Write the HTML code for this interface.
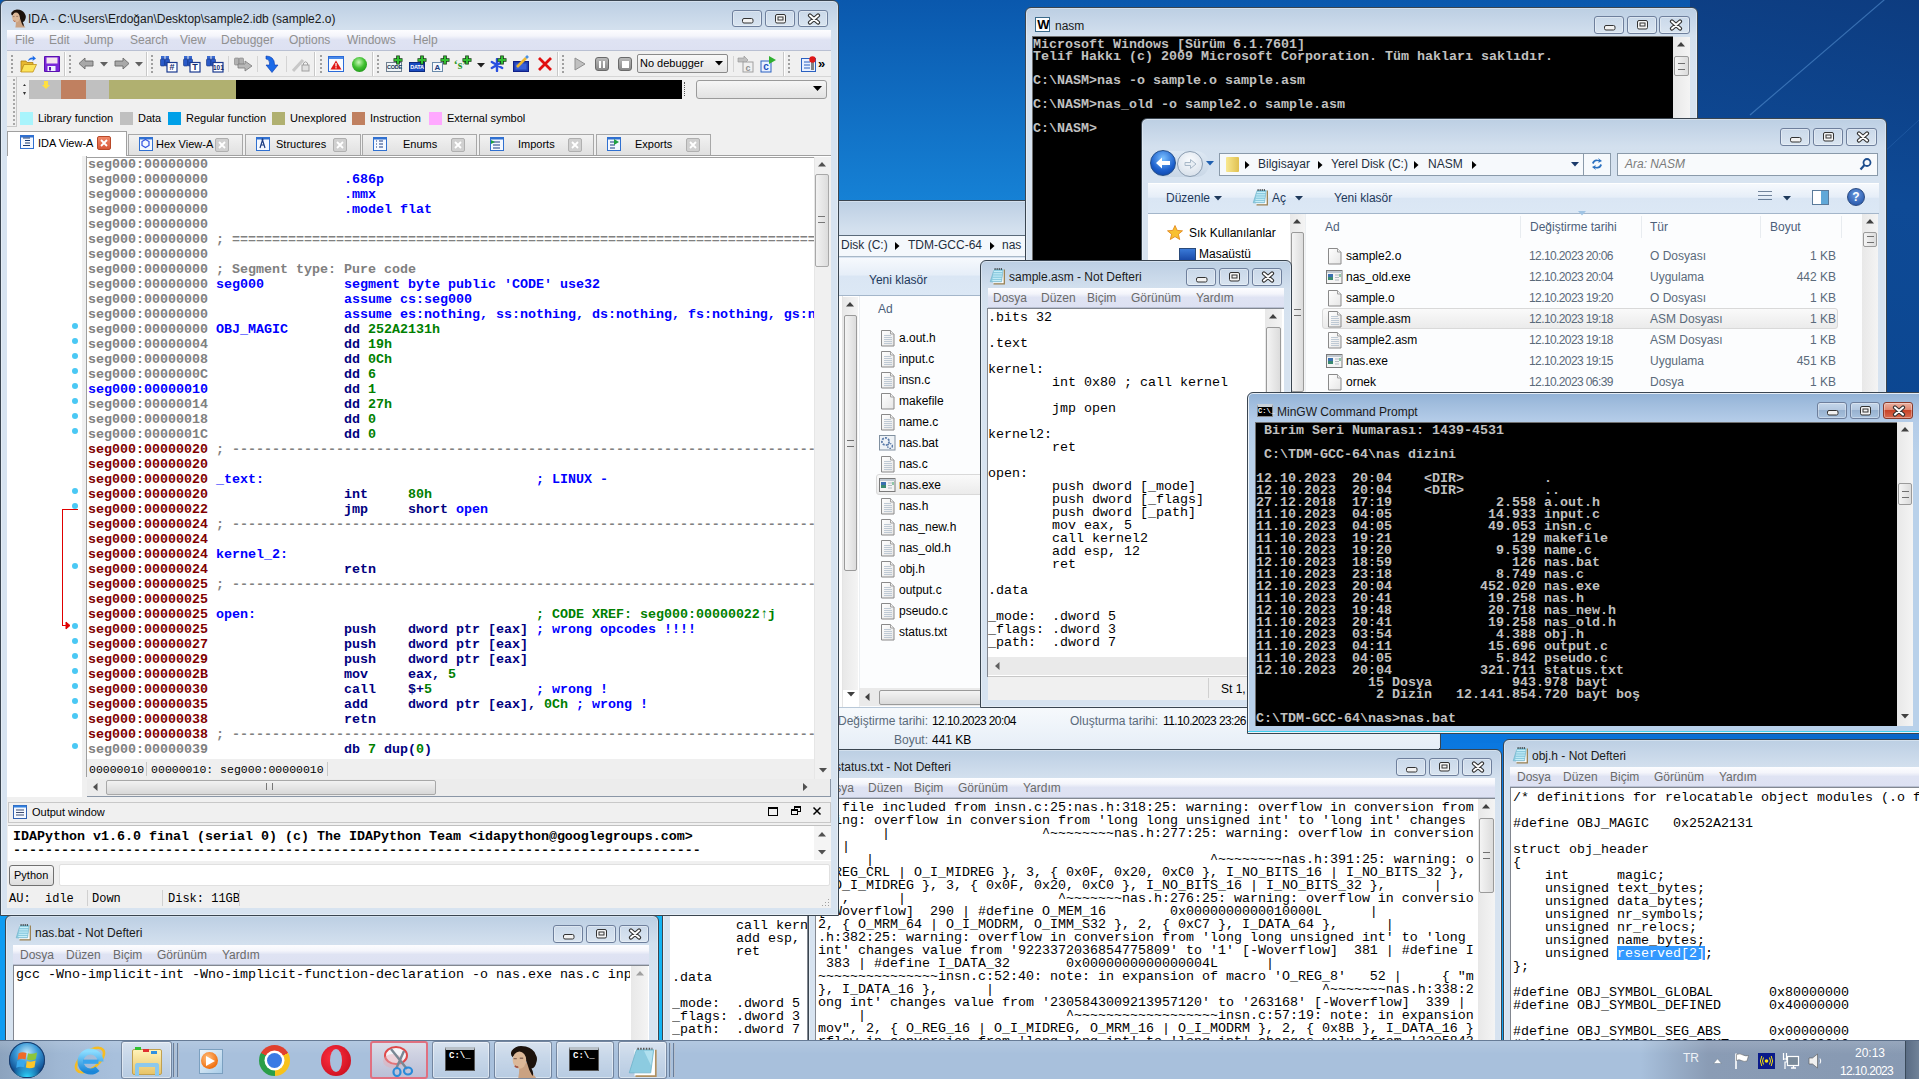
<!DOCTYPE html><html><head><meta charset="utf-8"><style>
html,body{margin:0;padding:0;width:1919px;height:1079px;overflow:hidden;background:#0e62bb}
body{position:relative;font-family:"Liberation Sans",sans-serif;font-size:12px;color:#000}
.a,.t{position:absolute}
.t{white-space:pre;line-height:15px}
.ui{font-family:"Liberation Sans",sans-serif;font-size:12px;line-height:15px}
.m{font-family:"Liberation Mono",monospace}
</style></head><body><div class="a" style="left:0;top:0;width:1919px;height:1079px;background:linear-gradient(180deg,#0a58ad 0px,#1682d6 205px,#0e74d8 600px,#0b78e0 750px,#10a0f0 1000px)"></div><div class="a" style="left:1690px;top:0;width:229px;height:420px;background:linear-gradient(190deg,#0d3c80 0%,#0e4a96 45%,#0b4690 100%)"></div><svg class="a" style="left:1690px;top:0" width="229" height="420"><path d="M60 115 L229 -30" stroke="#5a96d6" stroke-width="1.2" opacity="0.55"/><path d="M0 330 L229 120" stroke="#3a78c0" stroke-width="1" opacity="0.35"/></svg><div class="a" style="left:1440px;top:733px;width:479px;height:10px;background:linear-gradient(90deg,#0a78e0,#0a66c8)"></div><div class="a" style="left:0;top:905px;width:12px;height:140px;background:#0e9cf2"></div><div class="a" style="left:800px;top:200px;width:641px;height:549px;box-sizing:border-box;border:1px solid #3a4550;border-radius:6px 6px 0 0;background:linear-gradient(#bccfe3 0px,#c6d6e8 12px,#d3e0ee 28px,#d7e3f0 60px,#d7e3f0);box-shadow:inset 0 0 0 1px rgba(255,255,255,0.35)"></div><div class="a" style="left:839px;top:235px;width:186px;height:22px;background:#f4f8fc;border-top:1px solid #5a6a7a;border-bottom:1px solid #a8b8c8;box-sizing:border-box"></div><div class="t ui" style="left:841px;top:238px;color:#1e2e3e">Disk (C:)</div><svg class="a" style="left:895px;top:242px" width="5" height="8"><path d="M0 0L4.5 4L0 8Z" fill="#000"/></svg><div class="t ui" style="left:908px;top:238px;color:#1e2e3e">TDM-GCC-64</div><svg class="a" style="left:990px;top:242px" width="5" height="8"><path d="M0 0L4.5 4L0 8Z" fill="#000"/></svg><div class="t ui" style="left:1002px;top:238px;color:#1e2e3e">nas</div><div class="a" style="left:839px;top:258px;width:600px;height:38px;background:linear-gradient(#f6f9fd 0%,#e6eef8 45%,#dae6f4 50%,#dce8f5 100%);border-bottom:1px solid #a4b6ca;box-sizing:border-box"></div><div class="t ui" style="left:869px;top:273px;color:#1e395b">Yeni klasör</div><div class="a" style="left:839px;top:296px;width:600px;height:411px;background:#fff"></div><div class="a" style="left:843px;top:297px;width:15px;height:393px;background:linear-gradient(90deg,#e8e8e8,#f4f4f4);"></div><div class="a" style="left:844px;top:315px;width:13px;height:256px;background:linear-gradient(90deg,#f4f4f4,#dcdcdc);border:1px solid #9a9a9a;border-radius:2px;box-sizing:border-box"></div><svg class="a" style="left:846px;top:302px" width="8" height="5"><path d="M0 4.5L4 0L8 4.5Z" fill="#404040"/></svg><div class="a" style="left:847px;top:440px;width:7px;height:5px;border-top:1px solid #707070;border-bottom:1px solid #707070"></div><svg class="a" style="left:847px;top:692px" width="8" height="5"><path d="M0 0L4 4.5L8 0Z" fill="#404040"/></svg><div class="a" style="left:839px;top:296px;width:4px;height:411px;background:#fdfdfd;border-right:1px solid #e4e4e4;box-sizing:border-box"></div><div class="a" style="left:859px;top:296px;width:580px;height:411px;background:#fcfdfe;border-left:1px solid #eceff2;box-sizing:border-box"></div><div class="t ui" style="left:878px;top:302px;color:#4c607a">Ad</div><svg class="a" style="left:881px;top:330px" width="14" height="17"><defs><linearGradient id="fg" x1="0" y1="0" x2="1" y2="1"><stop offset="0" stop-color="#ffffff"/><stop offset="1" stop-color="#e6e6e6"/></linearGradient></defs><path d="M0.5 0.5H9.5L13 4V16H0.5Z" fill="url(#fg)" stroke="#8a8a8a"/><path d="M9.5 0.5V4H13" fill="#f0f0f0" stroke="#a0a0a0"/><path d="M3 5.5H10M3 7.5H11M3 9.5H11M3 11.5H11M3 13.5H11" stroke="#b8c4d0" stroke-width="0.9"/></svg><div class="t ui" style="left:899px;top:331px;color:#000">a.out.h</div><svg class="a" style="left:881px;top:351px" width="14" height="17"><defs><linearGradient id="fg" x1="0" y1="0" x2="1" y2="1"><stop offset="0" stop-color="#ffffff"/><stop offset="1" stop-color="#e6e6e6"/></linearGradient></defs><path d="M0.5 0.5H9.5L13 4V16H0.5Z" fill="url(#fg)" stroke="#8a8a8a"/><path d="M9.5 0.5V4H13" fill="#f0f0f0" stroke="#a0a0a0"/><path d="M3 5.5H10M3 7.5H11M3 9.5H11M3 11.5H11M3 13.5H11" stroke="#b8c4d0" stroke-width="0.9"/></svg><div class="t ui" style="left:899px;top:352px;color:#000">input.c</div><svg class="a" style="left:881px;top:372px" width="14" height="17"><defs><linearGradient id="fg" x1="0" y1="0" x2="1" y2="1"><stop offset="0" stop-color="#ffffff"/><stop offset="1" stop-color="#e6e6e6"/></linearGradient></defs><path d="M0.5 0.5H9.5L13 4V16H0.5Z" fill="url(#fg)" stroke="#8a8a8a"/><path d="M9.5 0.5V4H13" fill="#f0f0f0" stroke="#a0a0a0"/><path d="M3 5.5H10M3 7.5H11M3 9.5H11M3 11.5H11M3 13.5H11" stroke="#b8c4d0" stroke-width="0.9"/></svg><div class="t ui" style="left:899px;top:373px;color:#000">insn.c</div><svg class="a" style="left:881px;top:393px" width="14" height="17"><defs><linearGradient id="fg" x1="0" y1="0" x2="1" y2="1"><stop offset="0" stop-color="#ffffff"/><stop offset="1" stop-color="#e6e6e6"/></linearGradient></defs><path d="M0.5 0.5H9.5L13 4V16H0.5Z" fill="url(#fg)" stroke="#8a8a8a"/><path d="M9.5 0.5V4H13" fill="#f0f0f0" stroke="#a0a0a0"/></svg><div class="t ui" style="left:899px;top:394px;color:#000">makefile</div><svg class="a" style="left:881px;top:414px" width="14" height="17"><defs><linearGradient id="fg" x1="0" y1="0" x2="1" y2="1"><stop offset="0" stop-color="#ffffff"/><stop offset="1" stop-color="#e6e6e6"/></linearGradient></defs><path d="M0.5 0.5H9.5L13 4V16H0.5Z" fill="url(#fg)" stroke="#8a8a8a"/><path d="M9.5 0.5V4H13" fill="#f0f0f0" stroke="#a0a0a0"/><path d="M3 5.5H10M3 7.5H11M3 9.5H11M3 11.5H11M3 13.5H11" stroke="#b8c4d0" stroke-width="0.9"/></svg><div class="t ui" style="left:899px;top:415px;color:#000">name.c</div><svg class="a" style="left:879px;top:435px" width="17" height="16"><rect x="0.5" y="0.5" width="15.5" height="14.5" fill="#eef2f6" stroke="#8090a0"/><circle cx="6.5" cy="6.5" r="3.6" fill="none" stroke="#5a7aa8" stroke-width="1.8" stroke-dasharray="2 1.2"/><circle cx="11" cy="11" r="2.4" fill="none" stroke="#5a7aa8" stroke-width="1.4" stroke-dasharray="1.5 1"/></svg><div class="t ui" style="left:899px;top:436px;color:#000">nas.bat</div><svg class="a" style="left:881px;top:456px" width="14" height="17"><defs><linearGradient id="fg" x1="0" y1="0" x2="1" y2="1"><stop offset="0" stop-color="#ffffff"/><stop offset="1" stop-color="#e6e6e6"/></linearGradient></defs><path d="M0.5 0.5H9.5L13 4V16H0.5Z" fill="url(#fg)" stroke="#8a8a8a"/><path d="M9.5 0.5V4H13" fill="#f0f0f0" stroke="#a0a0a0"/><path d="M3 5.5H10M3 7.5H11M3 9.5H11M3 11.5H11M3 13.5H11" stroke="#b8c4d0" stroke-width="0.9"/></svg><div class="t ui" style="left:899px;top:457px;color:#000">nas.c</div><div class="a" style="left:876px;top:474px;width:110px;height:21px;background:linear-gradient(#fafafa,#ebebeb);border:1px solid #d9d9d9;border-radius:3px;box-sizing:border-box"></div><svg class="a" style="left:879px;top:478px" width="17" height="15"><rect x="0.5" y="0.5" width="15.5" height="13" fill="#f4f4f4" stroke="#7a7a7a"/><rect x="1" y="1" width="15" height="2" fill="#c0c8d0"/><rect x="2" y="4" width="5" height="6" fill="#3a8a70"/><rect x="2" y="4" width="5" height="3" fill="#3a70b0"/><path d="M9 5H13M9 7.5H13M9 10H13" stroke="#b0b8c0"/><path d="M14 4V7" stroke="#2a9a5a"/></svg><div class="t ui" style="left:899px;top:478px;color:#000">nas.exe</div><svg class="a" style="left:881px;top:498px" width="14" height="17"><defs><linearGradient id="fg" x1="0" y1="0" x2="1" y2="1"><stop offset="0" stop-color="#ffffff"/><stop offset="1" stop-color="#e6e6e6"/></linearGradient></defs><path d="M0.5 0.5H9.5L13 4V16H0.5Z" fill="url(#fg)" stroke="#8a8a8a"/><path d="M9.5 0.5V4H13" fill="#f0f0f0" stroke="#a0a0a0"/><path d="M3 5.5H10M3 7.5H11M3 9.5H11M3 11.5H11M3 13.5H11" stroke="#b8c4d0" stroke-width="0.9"/></svg><div class="t ui" style="left:899px;top:499px;color:#000">nas.h</div><svg class="a" style="left:881px;top:519px" width="14" height="17"><defs><linearGradient id="fg" x1="0" y1="0" x2="1" y2="1"><stop offset="0" stop-color="#ffffff"/><stop offset="1" stop-color="#e6e6e6"/></linearGradient></defs><path d="M0.5 0.5H9.5L13 4V16H0.5Z" fill="url(#fg)" stroke="#8a8a8a"/><path d="M9.5 0.5V4H13" fill="#f0f0f0" stroke="#a0a0a0"/><path d="M3 5.5H10M3 7.5H11M3 9.5H11M3 11.5H11M3 13.5H11" stroke="#b8c4d0" stroke-width="0.9"/></svg><div class="t ui" style="left:899px;top:520px;color:#000">nas_new.h</div><svg class="a" style="left:881px;top:540px" width="14" height="17"><defs><linearGradient id="fg" x1="0" y1="0" x2="1" y2="1"><stop offset="0" stop-color="#ffffff"/><stop offset="1" stop-color="#e6e6e6"/></linearGradient></defs><path d="M0.5 0.5H9.5L13 4V16H0.5Z" fill="url(#fg)" stroke="#8a8a8a"/><path d="M9.5 0.5V4H13" fill="#f0f0f0" stroke="#a0a0a0"/><path d="M3 5.5H10M3 7.5H11M3 9.5H11M3 11.5H11M3 13.5H11" stroke="#b8c4d0" stroke-width="0.9"/></svg><div class="t ui" style="left:899px;top:541px;color:#000">nas_old.h</div><svg class="a" style="left:881px;top:561px" width="14" height="17"><defs><linearGradient id="fg" x1="0" y1="0" x2="1" y2="1"><stop offset="0" stop-color="#ffffff"/><stop offset="1" stop-color="#e6e6e6"/></linearGradient></defs><path d="M0.5 0.5H9.5L13 4V16H0.5Z" fill="url(#fg)" stroke="#8a8a8a"/><path d="M9.5 0.5V4H13" fill="#f0f0f0" stroke="#a0a0a0"/><path d="M3 5.5H10M3 7.5H11M3 9.5H11M3 11.5H11M3 13.5H11" stroke="#b8c4d0" stroke-width="0.9"/></svg><div class="t ui" style="left:899px;top:562px;color:#000">obj.h</div><svg class="a" style="left:881px;top:582px" width="14" height="17"><defs><linearGradient id="fg" x1="0" y1="0" x2="1" y2="1"><stop offset="0" stop-color="#ffffff"/><stop offset="1" stop-color="#e6e6e6"/></linearGradient></defs><path d="M0.5 0.5H9.5L13 4V16H0.5Z" fill="url(#fg)" stroke="#8a8a8a"/><path d="M9.5 0.5V4H13" fill="#f0f0f0" stroke="#a0a0a0"/><path d="M3 5.5H10M3 7.5H11M3 9.5H11M3 11.5H11M3 13.5H11" stroke="#b8c4d0" stroke-width="0.9"/></svg><div class="t ui" style="left:899px;top:583px;color:#000">output.c</div><svg class="a" style="left:881px;top:603px" width="14" height="17"><defs><linearGradient id="fg" x1="0" y1="0" x2="1" y2="1"><stop offset="0" stop-color="#ffffff"/><stop offset="1" stop-color="#e6e6e6"/></linearGradient></defs><path d="M0.5 0.5H9.5L13 4V16H0.5Z" fill="url(#fg)" stroke="#8a8a8a"/><path d="M9.5 0.5V4H13" fill="#f0f0f0" stroke="#a0a0a0"/><path d="M3 5.5H10M3 7.5H11M3 9.5H11M3 11.5H11M3 13.5H11" stroke="#b8c4d0" stroke-width="0.9"/></svg><div class="t ui" style="left:899px;top:604px;color:#000">pseudo.c</div><svg class="a" style="left:881px;top:624px" width="14" height="17"><defs><linearGradient id="fg" x1="0" y1="0" x2="1" y2="1"><stop offset="0" stop-color="#ffffff"/><stop offset="1" stop-color="#e6e6e6"/></linearGradient></defs><path d="M0.5 0.5H9.5L13 4V16H0.5Z" fill="url(#fg)" stroke="#8a8a8a"/><path d="M9.5 0.5V4H13" fill="#f0f0f0" stroke="#a0a0a0"/><path d="M3 5.5H10M3 7.5H11M3 9.5H11M3 11.5H11M3 13.5H11" stroke="#b8c4d0" stroke-width="0.9"/></svg><div class="t ui" style="left:899px;top:625px;color:#000">status.txt</div><div class="a" style="left:859px;top:688px;width:130px;height:18px;background:#eaeaea"></div><div class="a" style="left:879px;top:690px;width:110px;height:15px;background:linear-gradient(#f4f4f4,#dadada);border:1px solid #9a9a9a;border-radius:2px;box-sizing:border-box"></div><svg class="a" style="left:865px;top:693px" width="5" height="8"><path d="M4.5 0L0 4L4.5 8Z" fill="#404040"/></svg><div class="a" style="left:839px;top:707px;width:600px;height:42px;background:linear-gradient(#f6f9fc,#e6eef7);border-top:1px solid #b8c8d8;box-sizing:border-box"></div><div class="t ui" style="left:838px;top:714px;color:#5a6a7a">Değiştirme tarihi:</div><div class="t ui" style="left:932px;top:714px;color:#000;letter-spacing:-0.6px">12.10.2023 20:04</div><div class="t ui" style="left:1070px;top:714px;color:#5a6a7a">Oluşturma tarihi:</div><div class="t ui" style="left:1163px;top:714px;color:#000;letter-spacing:-0.6px">11.10.2023 23:26</div><div class="t ui" style="left:894px;top:733px;color:#5a6a7a">Boyut:</div><div class="t ui" style="left:932px;top:733px;color:#000">441 KB</div><div class="a" style="left:1025px;top:7px;width:673px;height:400px;box-sizing:border-box;border:1px solid #3a4550;border-radius:6px 6px 0 0;background:linear-gradient(#bccfe3 0px,#c6d6e8 12px,#d3e0ee 28px,#d7e3f0 60px,#d7e3f0);box-shadow:inset 0 0 0 1px rgba(255,255,255,0.35)"></div><div class="a" style="left:1035px;top:17px;width:15px;height:15px;background:#fff;border:1px solid #3a6a8a;box-sizing:border-box;font:bold 13px/13px 'Liberation Sans';color:#000;text-align:center;letter-spacing:-2px">W</div><div class="t ui" style="left:1055px;top:19px;color:#1a1a1a">nasm</div><div class="a" style="left:1594px;top:16px;width:30px;height:18px;border:1px solid #6e7f9c;border-radius:3px;box-sizing:border-box;background:linear-gradient(rgba(255,255,255,0.10),rgba(255,255,255,0.18));box-shadow:inset 0 0 0 1px rgba(255,255,255,0.35)"><svg class="a" style="left:9px;top:8px" width="12" height="6"><rect x="0.5" y="0.5" width="10.5" height="4.5" rx="1.5" fill="#f2f2f2" stroke="#333" stroke-width="1"/></svg></div><div class="a" style="left:1627px;top:16px;width:30px;height:18px;border:1px solid #6e7f9c;border-radius:3px;box-sizing:border-box;background:linear-gradient(rgba(255,255,255,0.10),rgba(255,255,255,0.18));box-shadow:inset 0 0 0 1px rgba(255,255,255,0.35)"><svg class="a" style="left:9px;top:3px" width="12" height="10"><rect x="0.5" y="0.5" width="10" height="8.5" rx="1.5" fill="#f4f4f4" stroke="#333" stroke-width="1"/><rect x="3" y="3" width="5" height="3" fill="#f4f4f4" stroke="#333" stroke-width="1"/></svg></div><div class="a" style="left:1659px;top:16px;width:31px;height:18px;border:1px solid #6e7f9c;border-radius:3px;box-sizing:border-box;background:linear-gradient(rgba(255,255,255,0.10),rgba(255,255,255,0.18));box-shadow:inset 0 0 0 1px rgba(255,255,255,0.35)"><svg class="a" style="left:9px;top:2px" width="14" height="12"><path d="M3 2.5L11 9.5M11 2.5L3 9.5" stroke="#333" stroke-width="4.2" stroke-linecap="round"/><path d="M3 2.5L11 9.5M11 2.5L3 9.5" stroke="#fff" stroke-width="2" stroke-linecap="round"/></svg></div><div class="a" style="left:1032px;top:36px;width:641px;height:364px;background:#000;border-top:1px solid #707070;border-left:1px solid #707070;box-sizing:border-box"></div><div class="a" style="left:1033px;top:39px;font-family:'Liberation Mono',monospace;font-size:13.33px;font-weight:bold;color:#c0c0c0;line-height:12px;white-space:pre">Microsoft Windows [Sürüm 6.1.7601]
Telif Hakkı (c) 2009 Microsoft Corporation. Tüm hakları saklıdır.

C:\NASM&gt;nas -o sample.o sample.asm

C:\NASM&gt;nas_old -o sample2.o sample.asm

C:\NASM&gt;</div><div class="a" style="left:1673px;top:37px;width:17px;height:363px;background:linear-gradient(90deg,#e8e8e8,#f4f4f4);"></div><div class="a" style="left:1674px;top:56px;width:15px;height:20px;background:linear-gradient(90deg,#f4f4f4,#dcdcdc);border:1px solid #9a9a9a;border-radius:2px;box-sizing:border-box"></div><svg class="a" style="left:1677px;top:42px" width="8" height="5"><path d="M0 4.5L4 0L8 4.5Z" fill="#404040"/></svg><div class="a" style="left:1678px;top:63px;width:7px;height:5px;border-top:1px solid #707070;border-bottom:1px solid #707070"></div><div class="a" style="left:1141px;top:118px;width:746px;height:290px;box-sizing:border-box;border:1px solid #3a4550;border-radius:6px 6px 0 0;background:linear-gradient(#bccfe3 0px,#c6d6e8 12px,#d3e0ee 28px,#d7e3f0 60px,#d7e3f0);box-shadow:inset 0 0 0 1px rgba(255,255,255,0.35)"></div><div class="a" style="left:1780px;top:128px;width:30px;height:18px;border:1px solid #6e7f9c;border-radius:3px;box-sizing:border-box;background:linear-gradient(rgba(255,255,255,0.10),rgba(255,255,255,0.18));box-shadow:inset 0 0 0 1px rgba(255,255,255,0.35)"><svg class="a" style="left:9px;top:8px" width="12" height="6"><rect x="0.5" y="0.5" width="10.5" height="4.5" rx="1.5" fill="#f2f2f2" stroke="#333" stroke-width="1"/></svg></div><div class="a" style="left:1813px;top:128px;width:30px;height:18px;border:1px solid #6e7f9c;border-radius:3px;box-sizing:border-box;background:linear-gradient(rgba(255,255,255,0.10),rgba(255,255,255,0.18));box-shadow:inset 0 0 0 1px rgba(255,255,255,0.35)"><svg class="a" style="left:9px;top:3px" width="12" height="10"><rect x="0.5" y="0.5" width="10" height="8.5" rx="1.5" fill="#f4f4f4" stroke="#333" stroke-width="1"/><rect x="3" y="3" width="5" height="3" fill="#f4f4f4" stroke="#333" stroke-width="1"/></svg></div><div class="a" style="left:1846px;top:128px;width:31px;height:18px;border:1px solid #6e7f9c;border-radius:3px;box-sizing:border-box;background:linear-gradient(rgba(255,255,255,0.10),rgba(255,255,255,0.18));box-shadow:inset 0 0 0 1px rgba(255,255,255,0.35)"><svg class="a" style="left:9px;top:2px" width="14" height="12"><path d="M3 2.5L11 9.5M11 2.5L3 9.5" stroke="#333" stroke-width="4.2" stroke-linecap="round"/><path d="M3 2.5L11 9.5M11 2.5L3 9.5" stroke="#fff" stroke-width="2" stroke-linecap="round"/></svg></div><div class="a" style="left:1151px;top:151px;width:58px;height:26px;background:linear-gradient(#dde8f3,#c9d7e6);border-radius:13px"></div><div class="a" style="left:1150px;top:150px;width:26px;height:26px;background:radial-gradient(circle at 50% 30%,#7ac0ff,#1c5fcc 60%,#0a3c9a);border:1px solid #234f8a;border-radius:50%;box-sizing:border-box"></div><svg class="a" style="left:1155px;top:156px" width="16" height="14"><path d="M1 7L7 1.5V5H15V9H7V12.5Z" fill="#fff"/></svg><div class="a" style="left:1177px;top:151px;width:26px;height:26px;background:radial-gradient(circle at 50% 35%,#fafcfe,#d0dae6);border:1px solid #8a9cb0;border-radius:50%;box-sizing:border-box"></div><svg class="a" style="left:1184px;top:158px" width="13" height="12"><path d="M12 6L6.5 1.5V4.5H1V7.5H6.5V10.5Z" fill="#e8eef4" stroke="#a8b8c8"/></svg><svg class="a" style="left:1206px;top:161px" width="8" height="5"><path d="M0 0H8L4 4.5Z" fill="#2060b0"/></svg><div class="a" style="left:1219px;top:153px;width:365px;height:23px;background:#f6f9fc;border:1px solid #8a9aaa;box-sizing:border-box"></div><div class="a" style="left:1226px;top:157px;width:13px;height:15px;background:linear-gradient(90deg,#f8e890,#e0c050);border-radius:1px"></div><svg class="a" style="left:1245px;top:161px" width="5" height="8"><path d="M0 0L4.5 4L0 8Z" fill="#000"/></svg><div class="t ui" style="left:1258px;top:157px;color:#1e2e3e">Bilgisayar</div><svg class="a" style="left:1318px;top:161px" width="5" height="8"><path d="M0 0L4.5 4L0 8Z" fill="#000"/></svg><div class="t ui" style="left:1331px;top:157px;color:#1e2e3e">Yerel Disk (C:)</div><svg class="a" style="left:1414px;top:161px" width="5" height="8"><path d="M0 0L4.5 4L0 8Z" fill="#000"/></svg><div class="t ui" style="left:1428px;top:157px;color:#1e2e3e">NASM</div><svg class="a" style="left:1472px;top:161px" width="5" height="8"><path d="M0 0L4.5 4L0 8Z" fill="#000"/></svg><svg class="a" style="left:1571px;top:162px" width="8" height="5"><path d="M0 0H8L4 4.5Z" fill="#1a3a6a"/></svg><div class="a" style="left:1584px;top:153px;width:27px;height:23px;background:#f6f9fc;border:1px solid #8a9aaa;border-left:none;box-sizing:border-box"></div><svg class="a" style="left:1590px;top:157px" width="14" height="14"><path d="M2 6 Q4 1 9 3 L8 1 L12 4 L8 6 L9 4.5 Q5 3 3.5 7Z M12 8 Q10 13 5 11 L6 13 L2 10 L6 8 L5 9.5 Q9 11 10.5 7Z" fill="#2a70c0"/></svg><div class="a" style="left:1617px;top:153px;width:261px;height:23px;background:#f8fafc;border:1px solid #8a9aaa;box-sizing:border-box"></div><div class="t ui" style="left:1625px;top:157px;color:#7a7a7a;font-style:italic">Ara: NASM</div><svg class="a" style="left:1859px;top:157px" width="13" height="14"><circle cx="8" cy="5.5" r="3.5" fill="none" stroke="#1e4e8e" stroke-width="1.8"/><path d="M5.5 8L1.5 12.5" stroke="#1e4e8e" stroke-width="2.2"/></svg><div class="a" style="left:1148px;top:183px;width:731px;height:31px;background:linear-gradient(#f6f9fd 0%,#e6eef8 45%,#dae6f4 50%,#dce8f5 100%);border-bottom:1px solid #a4b6ca;border-top:1px solid #fff;box-sizing:border-box"></div><div class="t ui" style="left:1166px;top:191px;color:#1e395b">Düzenle</div><svg class="a" style="left:1214px;top:196px" width="8" height="5"><path d="M0 0H8L4 4.5Z" fill="#1e395b"/></svg><svg class="a" style="left:1252px;top:188px" width="17" height="18"><rect x="4" y="2.5" width="11" height="14" fill="#fff"/><path d="M15.3 2.5V16.8H4.5" fill="none" stroke="#9a8050" stroke-width="1.3"/><path d="M5 2.5H14.2L12.6 14.8H1.2Z" fill="#8ccbe0"/><path d="M4.6 4.5H13.8M4.2 6.8H13.5M3.9 9.1H13.2M3.6 11.4H12.9M3.3 13.5H12.7" stroke="#c8eef8" stroke-width="1"/><path d="M5 2.5H14.2L12.6 14.8H1.2Z" fill="none" stroke="#6ab0c8" stroke-width="0.6"/><path d="M5.5 2H13.5" stroke="#333" stroke-width="1.4" stroke-dasharray="1.2 0.9"/></svg><div class="t ui" style="left:1272px;top:191px;color:#1e395b">Aç</div><svg class="a" style="left:1295px;top:196px" width="8" height="5"><path d="M0 0H8L4 4.5Z" fill="#1e395b"/></svg><div class="t ui" style="left:1334px;top:191px;color:#1e395b">Yeni klasör</div><div class="a" style="left:1758px;top:191px;width:14px;height:12px;background:repeating-linear-gradient(#1e395b 0,#1e395b 1px,transparent 1px,transparent 4px);opacity:0.6"></div><svg class="a" style="left:1783px;top:196px" width="8" height="5"><path d="M0 0H8L4 4.5Z" fill="#1e395b"/></svg><div class="a" style="left:1812px;top:190px;width:17px;height:15px;background:linear-gradient(90deg,#fff 55%,#60a8d8 55%);border:1px solid #5a7a9a;box-sizing:border-box"></div><div class="a" style="left:1847px;top:188px;width:18px;height:18px;background:radial-gradient(circle at 50% 35%,#6a9ae0,#1a4aa0);border:1px solid #2a4a80;border-radius:50%;box-sizing:border-box;font:bold 12px/16px 'Liberation Sans';color:#fff;text-align:center">?</div><div class="a" style="left:1148px;top:214px;width:142px;height:181px;background:#fff"></div><svg class="a" style="left:1167px;top:225px" width="16" height="15"><path d="M8 0.5L10.2 5.4L15.5 5.8L11.4 9.2L12.7 14.5L8 11.6L3.3 14.5L4.6 9.2L0.5 5.8L5.8 5.4Z" fill="#f8c030" stroke="#e08010" stroke-width="0.8"/></svg><div class="t ui" style="left:1189px;top:226px;color:#000">Sık Kullanılanlar</div><div class="a" style="left:1179px;top:248px;width:17px;height:13px;background:linear-gradient(#3a7ad8,#1a4aa8);border:1px solid #2a4a7a;box-sizing:border-box"></div><div class="t ui" style="left:1199px;top:247px;color:#000">Masaüstü</div><div class="a" style="left:1290px;top:214px;width:15px;height:181px;background:linear-gradient(90deg,#e8e8e8,#f4f4f4);"></div><div class="a" style="left:1291px;top:232px;width:13px;height:160px;background:linear-gradient(90deg,#f4f4f4,#dcdcdc);border:1px solid #9a9a9a;border-radius:2px;box-sizing:border-box"></div><svg class="a" style="left:1293px;top:219px" width="8" height="5"><path d="M0 4.5L4 0L8 4.5Z" fill="#404040"/></svg><div class="a" style="left:1294px;top:309px;width:7px;height:5px;border-top:1px solid #707070;border-bottom:1px solid #707070"></div><div class="a" style="left:1305px;top:214px;width:557px;height:181px;background:#fcfdfe;border-left:1px solid #eceff2;box-sizing:border-box"></div><div class="t ui" style="left:1325px;top:220px;color:#4c607a">Ad</div><div class="t ui" style="left:1530px;top:220px;color:#4c607a">Değiştirme tarihi</div><svg class="a" style="left:1578px;top:211px" width="8" height="5"><path d="M0 0H8L4 4.5Z" fill="#a0c4e4"/></svg><div class="a" style="left:1520px;top:216px;width:1px;height:22px;background:#e8ecf0"></div><div class="t ui" style="left:1650px;top:220px;color:#4c607a">Tür</div><div class="a" style="left:1641px;top:216px;width:1px;height:22px;background:#e8ecf0"></div><div class="t ui" style="left:1770px;top:220px;color:#4c607a">Boyut</div><div class="a" style="left:1760px;top:216px;width:1px;height:22px;background:#e8ecf0"></div><div class="a" style="left:1841px;top:216px;width:1px;height:22px;background:#e8ecf0"></div><svg class="a" style="left:1328px;top:248px" width="14" height="17"><defs><linearGradient id="fg" x1="0" y1="0" x2="1" y2="1"><stop offset="0" stop-color="#ffffff"/><stop offset="1" stop-color="#e6e6e6"/></linearGradient></defs><path d="M0.5 0.5H9.5L13 4V16H0.5Z" fill="url(#fg)" stroke="#8a8a8a"/><path d="M9.5 0.5V4H13" fill="#f0f0f0" stroke="#a0a0a0"/></svg><div class="t ui" style="left:1346px;top:249px;color:#000">sample2.o</div><div class="t ui" style="left:1529px;top:249px;color:#5a6a7a;letter-spacing:-0.6px">12.10.2023 20:06</div><div class="t ui" style="left:1650px;top:249px;color:#5a6a7a">O Dosyası</div><div class="t ui" style="left:1700px;width:136px;text-align:right;top:249px;color:#5a6a7a">1 KB</div><svg class="a" style="left:1326px;top:270px" width="17" height="15"><rect x="0.5" y="0.5" width="15.5" height="13" fill="#f4f4f4" stroke="#7a7a7a"/><rect x="1" y="1" width="15" height="2" fill="#c0c8d0"/><rect x="2" y="4" width="5" height="6" fill="#3a8a70"/><rect x="2" y="4" width="5" height="3" fill="#3a70b0"/><path d="M9 5H13M9 7.5H13M9 10H13" stroke="#b0b8c0"/><path d="M14 4V7" stroke="#2a9a5a"/></svg><div class="t ui" style="left:1346px;top:270px;color:#000">nas_old.exe</div><div class="t ui" style="left:1529px;top:270px;color:#5a6a7a;letter-spacing:-0.6px">12.10.2023 20:04</div><div class="t ui" style="left:1650px;top:270px;color:#5a6a7a">Uygulama</div><div class="t ui" style="left:1700px;width:136px;text-align:right;top:270px;color:#5a6a7a">442 KB</div><svg class="a" style="left:1328px;top:290px" width="14" height="17"><defs><linearGradient id="fg" x1="0" y1="0" x2="1" y2="1"><stop offset="0" stop-color="#ffffff"/><stop offset="1" stop-color="#e6e6e6"/></linearGradient></defs><path d="M0.5 0.5H9.5L13 4V16H0.5Z" fill="url(#fg)" stroke="#8a8a8a"/><path d="M9.5 0.5V4H13" fill="#f0f0f0" stroke="#a0a0a0"/></svg><div class="t ui" style="left:1346px;top:291px;color:#000">sample.o</div><div class="t ui" style="left:1529px;top:291px;color:#5a6a7a;letter-spacing:-0.6px">12.10.2023 19:20</div><div class="t ui" style="left:1650px;top:291px;color:#5a6a7a">O Dosyası</div><div class="t ui" style="left:1700px;width:136px;text-align:right;top:291px;color:#5a6a7a">1 KB</div><div class="a" style="left:1322px;top:308px;width:516px;height:21px;background:linear-gradient(#fafafa,#ebebeb);border:1px solid #d9d9d9;border-radius:3px;box-sizing:border-box"></div><svg class="a" style="left:1328px;top:311px" width="14" height="17"><defs><linearGradient id="fg" x1="0" y1="0" x2="1" y2="1"><stop offset="0" stop-color="#ffffff"/><stop offset="1" stop-color="#e6e6e6"/></linearGradient></defs><path d="M0.5 0.5H9.5L13 4V16H0.5Z" fill="url(#fg)" stroke="#8a8a8a"/><path d="M9.5 0.5V4H13" fill="#f0f0f0" stroke="#a0a0a0"/><path d="M3 5.5H10M3 7.5H11M3 9.5H11M3 11.5H11M3 13.5H11" stroke="#b8c4d0" stroke-width="0.9"/></svg><div class="t ui" style="left:1346px;top:312px;color:#000">sample.asm</div><div class="t ui" style="left:1529px;top:312px;color:#5a6a7a;letter-spacing:-0.6px">12.10.2023 19:18</div><div class="t ui" style="left:1650px;top:312px;color:#5a6a7a">ASM Dosyası</div><div class="t ui" style="left:1700px;width:136px;text-align:right;top:312px;color:#5a6a7a">1 KB</div><svg class="a" style="left:1328px;top:332px" width="14" height="17"><defs><linearGradient id="fg" x1="0" y1="0" x2="1" y2="1"><stop offset="0" stop-color="#ffffff"/><stop offset="1" stop-color="#e6e6e6"/></linearGradient></defs><path d="M0.5 0.5H9.5L13 4V16H0.5Z" fill="url(#fg)" stroke="#8a8a8a"/><path d="M9.5 0.5V4H13" fill="#f0f0f0" stroke="#a0a0a0"/><path d="M3 5.5H10M3 7.5H11M3 9.5H11M3 11.5H11M3 13.5H11" stroke="#b8c4d0" stroke-width="0.9"/></svg><div class="t ui" style="left:1346px;top:333px;color:#000">sample2.asm</div><div class="t ui" style="left:1529px;top:333px;color:#5a6a7a;letter-spacing:-0.6px">12.10.2023 19:18</div><div class="t ui" style="left:1650px;top:333px;color:#5a6a7a">ASM Dosyası</div><div class="t ui" style="left:1700px;width:136px;text-align:right;top:333px;color:#5a6a7a">1 KB</div><svg class="a" style="left:1326px;top:354px" width="17" height="15"><rect x="0.5" y="0.5" width="15.5" height="13" fill="#f4f4f4" stroke="#7a7a7a"/><rect x="1" y="1" width="15" height="2" fill="#c0c8d0"/><rect x="2" y="4" width="5" height="6" fill="#3a8a70"/><rect x="2" y="4" width="5" height="3" fill="#3a70b0"/><path d="M9 5H13M9 7.5H13M9 10H13" stroke="#b0b8c0"/><path d="M14 4V7" stroke="#2a9a5a"/></svg><div class="t ui" style="left:1346px;top:354px;color:#000">nas.exe</div><div class="t ui" style="left:1529px;top:354px;color:#5a6a7a;letter-spacing:-0.6px">12.10.2023 19:15</div><div class="t ui" style="left:1650px;top:354px;color:#5a6a7a">Uygulama</div><div class="t ui" style="left:1700px;width:136px;text-align:right;top:354px;color:#5a6a7a">451 KB</div><svg class="a" style="left:1328px;top:374px" width="14" height="17"><defs><linearGradient id="fg" x1="0" y1="0" x2="1" y2="1"><stop offset="0" stop-color="#ffffff"/><stop offset="1" stop-color="#e6e6e6"/></linearGradient></defs><path d="M0.5 0.5H9.5L13 4V16H0.5Z" fill="url(#fg)" stroke="#8a8a8a"/><path d="M9.5 0.5V4H13" fill="#f0f0f0" stroke="#a0a0a0"/></svg><div class="t ui" style="left:1346px;top:375px;color:#000">ornek</div><div class="t ui" style="left:1529px;top:375px;color:#5a6a7a;letter-spacing:-0.6px">12.10.2023 06:39</div><div class="t ui" style="left:1650px;top:375px;color:#5a6a7a">Dosya</div><div class="t ui" style="left:1700px;width:136px;text-align:right;top:375px;color:#5a6a7a">1 KB</div><div class="a" style="left:1862px;top:214px;width:16px;height:181px;background:linear-gradient(90deg,#e8e8e8,#f4f4f4);"></div><div class="a" style="left:1863px;top:232px;width:14px;height:15px;background:linear-gradient(90deg,#f4f4f4,#dcdcdc);border:1px solid #9a9a9a;border-radius:2px;box-sizing:border-box"></div><svg class="a" style="left:1866px;top:219px" width="8" height="5"><path d="M0 4.5L4 0L8 4.5Z" fill="#404040"/></svg><div class="a" style="left:1867px;top:236px;width:7px;height:5px;border-top:1px solid #707070;border-bottom:1px solid #707070"></div><div class="a" style="left:980px;top:260px;width:312px;height:448px;box-sizing:border-box;border:1px solid #3a4550;border-radius:6px 6px 0 0;background:linear-gradient(#bccfe3 0px,#c6d6e8 12px,#d3e0ee 28px,#d7e3f0 60px,#d7e3f0);box-shadow:inset 0 0 0 1px rgba(255,255,255,0.35)"></div><svg class="a" style="left:989px;top:267px" width="17" height="18"><rect x="4" y="2.5" width="11" height="14" fill="#fff"/><path d="M15.3 2.5V16.8H4.5" fill="none" stroke="#9a8050" stroke-width="1.3"/><path d="M5 2.5H14.2L12.6 14.8H1.2Z" fill="#8ccbe0"/><path d="M4.6 4.5H13.8M4.2 6.8H13.5M3.9 9.1H13.2M3.6 11.4H12.9M3.3 13.5H12.7" stroke="#c8eef8" stroke-width="1"/><path d="M5 2.5H14.2L12.6 14.8H1.2Z" fill="none" stroke="#6ab0c8" stroke-width="0.6"/><path d="M5.5 2H13.5" stroke="#333" stroke-width="1.4" stroke-dasharray="1.2 0.9"/></svg><div class="t ui" style="left:1009px;top:270px;color:#1a1a1a">sample.asm - Not Defteri</div><div class="a" style="left:1186px;top:268px;width:30px;height:18px;border:1px solid #6e7f9c;border-radius:3px;box-sizing:border-box;background:linear-gradient(rgba(255,255,255,0.10),rgba(255,255,255,0.18));box-shadow:inset 0 0 0 1px rgba(255,255,255,0.35)"><svg class="a" style="left:9px;top:8px" width="12" height="6"><rect x="0.5" y="0.5" width="10.5" height="4.5" rx="1.5" fill="#f2f2f2" stroke="#333" stroke-width="1"/></svg></div><div class="a" style="left:1219px;top:268px;width:30px;height:18px;border:1px solid #6e7f9c;border-radius:3px;box-sizing:border-box;background:linear-gradient(rgba(255,255,255,0.10),rgba(255,255,255,0.18));box-shadow:inset 0 0 0 1px rgba(255,255,255,0.35)"><svg class="a" style="left:9px;top:3px" width="12" height="10"><rect x="0.5" y="0.5" width="10" height="8.5" rx="1.5" fill="#f4f4f4" stroke="#333" stroke-width="1"/><rect x="3" y="3" width="5" height="3" fill="#f4f4f4" stroke="#333" stroke-width="1"/></svg></div><div class="a" style="left:1252px;top:268px;width:30px;height:18px;border:1px solid #6e7f9c;border-radius:3px;box-sizing:border-box;background:linear-gradient(rgba(255,255,255,0.10),rgba(255,255,255,0.18));box-shadow:inset 0 0 0 1px rgba(255,255,255,0.35)"><svg class="a" style="left:8px;top:2px" width="14" height="12"><path d="M3 2.5L11 9.5M11 2.5L3 9.5" stroke="#333" stroke-width="4.2" stroke-linecap="round"/><path d="M3 2.5L11 9.5M11 2.5L3 9.5" stroke="#fff" stroke-width="2" stroke-linecap="round"/></svg></div><div class="a" style="left:988px;top:288px;width:296px;height:20px;background:linear-gradient(#fdfdff 0%,#f4f5fb 30%,#dfe3f3 50%,#dde1f2 100%);border-bottom:1px solid #b9c0d2;box-sizing:border-box"></div><div class="t ui" style="left:993px;top:291px;color:#6a6a6a">Dosya</div><div class="t ui" style="left:1041px;top:291px;color:#6a6a6a">Düzen</div><div class="t ui" style="left:1087px;top:291px;color:#6a6a6a">Biçim</div><div class="t ui" style="left:1131px;top:291px;color:#6a6a6a">Görünüm</div><div class="t ui" style="left:1196px;top:291px;color:#6a6a6a">Yardım</div><div class="a" style="left:987px;top:308px;width:297px;height:369px;background:#fff;border-top:1px solid #828790;border-left:1px solid #828790;box-sizing:border-box"></div><div class="a" style="left:988px;top:311px;width:277px;height:347px;overflow:hidden;font-family:'Liberation Mono',monospace;font-size:13.33px;color:#000;line-height:13px;white-space:pre">.bits 32

.text

kernel:
        int 0x80 ; call kernel

        jmp open

kernel2:
        ret

open:
        push dword [_mode]
        push dword [_flags]
        push dword [_path]
        mov eax, 5
        call kernel2
        add esp, 12
        ret

.data

_mode:  .dword 5
_flags: .dword 3
_path:  .dword 7</div><div class="a" style="left:1265px;top:309px;width:17px;height:348px;background:linear-gradient(90deg,#e8e8e8,#f4f4f4);"></div><div class="a" style="left:1266px;top:327px;width:15px;height:340px;background:linear-gradient(90deg,#f4f4f4,#dcdcdc);border:1px solid #9a9a9a;border-radius:2px;box-sizing:border-box"></div><svg class="a" style="left:1269px;top:314px" width="8" height="5"><path d="M0 4.5L4 0L8 4.5Z" fill="#404040"/></svg><div class="a" style="left:1270px;top:494px;width:7px;height:5px;border-top:1px solid #707070;border-bottom:1px solid #707070"></div><svg class="a" style="left:1270px;top:645px" width="8" height="5"><path d="M0 0L4 4.5L8 0Z" fill="#404040"/></svg><div class="a" style="left:988px;top:657px;width:294px;height:18px;background:#eaeaea"></div><svg class="a" style="left:995px;top:662px" width="5" height="8"><path d="M4.5 0L0 4L4.5 8Z" fill="#606060"/></svg><div class="a" style="left:988px;top:676px;width:294px;height:24px;background:#f0f0f0;border-top:1px solid #c8c8c8;box-sizing:border-box"></div><div class="a" style="left:1208px;top:678px;width:1px;height:20px;background:#d0d0d0"></div><div class="t ui" style="left:1221px;top:682px;color:#000">St 1,</div><div class="a" style="left:1247px;top:392px;width:690px;height:342px;box-sizing:border-box;border:1px solid #3a4550;border-radius:6px 6px 0 0;background:linear-gradient(#92b2d6 0px,#a2bede 12px,#b4cce8 28px,#b9d1ea 60px,#b9d1ea);box-shadow:inset 0 0 0 1px rgba(255,255,255,0.75)"></div><div class="a" style="left:1257px;top:404px;width:16px;height:13px;background:#000;border:1px solid #888;border-top:3px solid #c8d0d8;box-sizing:border-box;font:bold 7px/8px 'Liberation Mono';color:#fff;white-space:pre">C:\_</div><div class="t ui" style="left:1277px;top:405px;color:#1a1a1a">MinGW Command Prompt</div><div class="a" style="left:1817px;top:402px;width:30px;height:17px;border:1px solid #6e7f9c;border-radius:3px;box-sizing:border-box;background:linear-gradient(#c4d6ea,#b4c8e0 45%,#98b2d0 50%,#a8c2de);box-shadow:inset 0 0 0 1px rgba(255,255,255,0.35)"><svg class="a" style="left:9px;top:7px" width="12" height="6"><rect x="0.5" y="0.5" width="10.5" height="4.5" rx="1.5" fill="#f2f2f2" stroke="#333" stroke-width="1"/></svg></div><div class="a" style="left:1850px;top:402px;width:30px;height:17px;border:1px solid #6e7f9c;border-radius:3px;box-sizing:border-box;background:linear-gradient(#c4d6ea,#b4c8e0 45%,#98b2d0 50%,#a8c2de);box-shadow:inset 0 0 0 1px rgba(255,255,255,0.35)"><svg class="a" style="left:9px;top:3px" width="12" height="10"><rect x="0.5" y="0.5" width="10" height="8.5" rx="1.5" fill="#f4f4f4" stroke="#333" stroke-width="1"/><rect x="3" y="3" width="5" height="3" fill="#f4f4f4" stroke="#333" stroke-width="1"/></svg></div><div class="a" style="left:1883px;top:402px;width:30px;height:17px;border:1px solid #8a3a2a;border-radius:3px;box-sizing:border-box;background:linear-gradient(#eab0a0,#e08872 45%,#c84428 50%,#d86a50);box-shadow:inset 0 0 0 1px rgba(255,255,255,0.35)"><svg class="a" style="left:8px;top:2px" width="14" height="12"><path d="M3 2.5L11 9.5M11 2.5L3 9.5" stroke="#333" stroke-width="4.2" stroke-linecap="round"/><path d="M3 2.5L11 9.5M11 2.5L3 9.5" stroke="#fff" stroke-width="2" stroke-linecap="round"/></svg></div><div class="a" style="left:1255px;top:422px;width:642px;height:304px;background:#000;border-top:1px solid #707070;border-left:1px solid #707070;box-sizing:border-box"></div><div class="a" style="left:1256px;top:425px;font-family:'Liberation Mono',monospace;font-size:13.33px;font-weight:bold;color:#c0c0c0;line-height:12px;white-space:pre"> Birim Seri Numarası: 1439-4531

 C:\TDM-GCC-64\nas dizini

12.10.2023  20:04    &lt;DIR&gt;          .
12.10.2023  20:04    &lt;DIR&gt;          ..
27.12.2018  17:19             2.558 a.out.h
11.10.2023  04:05            14.933 input.c
11.10.2023  04:05            49.053 insn.c
11.10.2023  19:21               129 makefile
11.10.2023  19:20             9.539 name.c
12.10.2023  18:59               126 nas.bat
11.10.2023  23:18             8.749 nas.c
12.10.2023  20:04           452.020 nas.exe
11.10.2023  20:41            19.258 nas.h
12.10.2023  19:48            20.718 nas_new.h
11.10.2023  20:41            19.258 nas_old.h
11.10.2023  03:54             4.388 obj.h
11.10.2023  04:11            15.696 output.c
11.10.2023  04:05             5.842 pseudo.c
12.10.2023  20:04           321.711 status.txt
              15 Dosya          943.978 bayt
               2 Dizin   12.141.854.720 bayt boş

C:\TDM-GCC-64\nas&gt;nas.bat</div><div class="a" style="left:1897px;top:422px;width:16px;height:304px;background:linear-gradient(90deg,#e8e8e8,#f4f4f4);"></div><div class="a" style="left:1898px;top:483px;width:14px;height:22px;background:linear-gradient(90deg,#f4f4f4,#dcdcdc);border:1px solid #9a9a9a;border-radius:2px;box-sizing:border-box"></div><svg class="a" style="left:1901px;top:427px" width="8" height="5"><path d="M0 4.5L4 0L8 4.5Z" fill="#404040"/></svg><div class="a" style="left:1902px;top:491px;width:7px;height:5px;border-top:1px solid #707070;border-bottom:1px solid #707070"></div><div class="a" style="left:1248px;top:731px;width:671px;height:1px;background:#40d0f0"></div><svg class="a" style="left:1901px;top:714px" width="8" height="5"><path d="M0 0L4 4.5L8 0Z" fill="#404040"/></svg><div class="a" style="left:655px;top:905px;width:10px;height:140px;background:#12b4f4"></div><div class="a" style="left:662px;top:700px;width:155px;height:350px;box-sizing:border-box;border:1px solid #3a4550;border-radius:6px 6px 0 0;background:linear-gradient(#bccfe3 0px,#c6d6e8 12px,#d3e0ee 28px,#d7e3f0 60px,#d7e3f0);box-shadow:inset 0 0 0 1px rgba(255,255,255,0.35)"></div><div class="a" style="left:670px;top:700px;width:137px;height:345px;background:#fff"></div><div class="a" style="left:807px;top:700px;width:1px;height:345px;background:#828790"></div><div class="a" style="left:672px;top:919px;width:135px;height:122px;overflow:hidden;font-family:'Liberation Mono',monospace;font-size:13.33px;color:#000;line-height:13px;white-space:pre">        call kernel2
        add esp, 12
        ret

.data

_mode:  .dword 5
_flags: .dword 3
_path:  .dword 7</div><div class="a" style="left:808px;top:749px;width:694px;height:300px;box-sizing:border-box;border:1px solid #3a4550;border-radius:6px 6px 0 0;background:linear-gradient(#bccfe3 0px,#c6d6e8 12px,#d3e0ee 28px,#d7e3f0 60px,#d7e3f0);box-shadow:inset 0 0 0 1px rgba(255,255,255,0.35)"></div><svg class="a" style="left:815px;top:757px" width="17" height="18"><rect x="4" y="2.5" width="11" height="14" fill="#fff"/><path d="M15.3 2.5V16.8H4.5" fill="none" stroke="#9a8050" stroke-width="1.3"/><path d="M5 2.5H14.2L12.6 14.8H1.2Z" fill="#8ccbe0"/><path d="M4.6 4.5H13.8M4.2 6.8H13.5M3.9 9.1H13.2M3.6 11.4H12.9M3.3 13.5H12.7" stroke="#c8eef8" stroke-width="1"/><path d="M5 2.5H14.2L12.6 14.8H1.2Z" fill="none" stroke="#6ab0c8" stroke-width="0.6"/><path d="M5.5 2H13.5" stroke="#333" stroke-width="1.4" stroke-dasharray="1.2 0.9"/></svg><div class="t ui" style="left:835px;top:760px;color:#1a1a1a">status.txt - Not Defteri</div><div class="a" style="left:1396px;top:758px;width:30px;height:18px;border:1px solid #6e7f9c;border-radius:3px;box-sizing:border-box;background:linear-gradient(rgba(255,255,255,0.10),rgba(255,255,255,0.18));box-shadow:inset 0 0 0 1px rgba(255,255,255,0.35)"><svg class="a" style="left:9px;top:8px" width="12" height="6"><rect x="0.5" y="0.5" width="10.5" height="4.5" rx="1.5" fill="#f2f2f2" stroke="#333" stroke-width="1"/></svg></div><div class="a" style="left:1429px;top:758px;width:30px;height:18px;border:1px solid #6e7f9c;border-radius:3px;box-sizing:border-box;background:linear-gradient(rgba(255,255,255,0.10),rgba(255,255,255,0.18));box-shadow:inset 0 0 0 1px rgba(255,255,255,0.35)"><svg class="a" style="left:9px;top:3px" width="12" height="10"><rect x="0.5" y="0.5" width="10" height="8.5" rx="1.5" fill="#f4f4f4" stroke="#333" stroke-width="1"/><rect x="3" y="3" width="5" height="3" fill="#f4f4f4" stroke="#333" stroke-width="1"/></svg></div><div class="a" style="left:1462px;top:758px;width:30px;height:18px;border:1px solid #6e7f9c;border-radius:3px;box-sizing:border-box;background:linear-gradient(rgba(255,255,255,0.10),rgba(255,255,255,0.18));box-shadow:inset 0 0 0 1px rgba(255,255,255,0.35)"><svg class="a" style="left:8px;top:2px" width="14" height="12"><path d="M3 2.5L11 9.5M11 2.5L3 9.5" stroke="#333" stroke-width="4.2" stroke-linecap="round"/><path d="M3 2.5L11 9.5M11 2.5L3 9.5" stroke="#fff" stroke-width="2" stroke-linecap="round"/></svg></div><div class="a" style="left:815px;top:778px;width:680px;height:20px;background:linear-gradient(#fdfdff 0%,#f4f5fb 30%,#dfe3f3 50%,#dde1f2 100%);border-bottom:1px solid #b9c0d2;box-sizing:border-box"></div><div class="t ui" style="left:820px;top:781px;color:#6a6a6a">Dosya</div><div class="t ui" style="left:868px;top:781px;color:#6a6a6a">Düzen</div><div class="t ui" style="left:914px;top:781px;color:#6a6a6a">Biçim</div><div class="t ui" style="left:958px;top:781px;color:#6a6a6a">Görünüm</div><div class="t ui" style="left:1023px;top:781px;color:#6a6a6a">Yardım</div><div class="a" style="left:815px;top:798px;width:680px;height:250px;background:#fff;border-top:1px solid #828790;border-left:1px solid #828790;box-sizing:border-box"></div><div class="a" style="left:818px;top:801px;width:660px;height:245px;overflow:hidden;font-family:'Liberation Mono',monospace;font-size:13.33px;color:#000;line-height:13px;white-space:pre">In file included from insn.c:25:nas.h:318:25: warning: overflow in conversion from
rning: overflow in conversion from 'long long unsigned int' to 'long int' changes 
        |                   ^~~~~~~~~nas.h:277:25: warning: overflow in conversion
   |
      |                                          ^~~~~~~~~nas.h:391:25: warning: o
_CREG_CRL | O_I_MIDREG }, 3, { 0x0F, 0x20, 0xC0 }, I_NO_BITS_16 | I_NO_BITS_32 },
  O_I_MIDREG }, 3, { 0x0F, 0x20, 0xC0 }, I_NO_BITS_16 | I_NO_BITS_32 },      |
   ,      |                   ^~~~~~~~nas.h:276:25: warning: overflow in conversio
[-Woverflow]  290 | #define O_MEM_16        0x0000000000010000L      |
2, { O_MRM_64 | O_I_MODRM, O_IMM_S32 }, 2, { 0xC7 }, I_DATA_64 },      |
.h:382:25: warning: overflow in conversion from 'long long unsigned int' to 'long
int' changes value from '9223372036854775809' to '1' [-Woverflow]  381 | #define I
 383 | #define I_DATA_32       0x0000000000000004L      |
~~~~~~~~~~~~~~~insn.c:52:40: note: in expansion of macro 'O_REG_8'   52 |     { "m
}, I_DATA_16 },      |                                         ^~~~~~~~nas.h:338:2
ong int' changes value from '2305843009213957120' to '263168' [-Woverflow]  339 | 
     |                         ^~~~~~~~~~~~~~~~~~~insn.c:57:19: note: in expansion
mov", 2, { O_REG_16 | O_I_MIDREG, O_MRM_16 | O_I_MODRM }, 2, { 0x8B }, I_DATA_16 }
rflow in conversion from 'long long int' to 'long int' changes value from '2305843</div><div class="a" style="left:1478px;top:799px;width:17px;height:250px;background:linear-gradient(90deg,#e8e8e8,#f4f4f4);"></div><div class="a" style="left:1479px;top:818px;width:15px;height:75px;background:linear-gradient(90deg,#f4f4f4,#dcdcdc);border:1px solid #9a9a9a;border-radius:2px;box-sizing:border-box"></div><svg class="a" style="left:1482px;top:804px" width="8" height="5"><path d="M0 4.5L4 0L8 4.5Z" fill="#404040"/></svg><div class="a" style="left:1483px;top:852px;width:7px;height:5px;border-top:1px solid #707070;border-bottom:1px solid #707070"></div><div class="a" style="left:1503px;top:739px;width:430px;height:310px;box-sizing:border-box;border:1px solid #3a4550;border-radius:6px 6px 0 0;background:linear-gradient(#bccfe3 0px,#c6d6e8 12px,#d3e0ee 28px,#d7e3f0 60px,#d7e3f0);box-shadow:inset 0 0 0 1px rgba(255,255,255,0.35)"></div><svg class="a" style="left:1512px;top:746px" width="17" height="18"><rect x="4" y="2.5" width="11" height="14" fill="#fff"/><path d="M15.3 2.5V16.8H4.5" fill="none" stroke="#9a8050" stroke-width="1.3"/><path d="M5 2.5H14.2L12.6 14.8H1.2Z" fill="#8ccbe0"/><path d="M4.6 4.5H13.8M4.2 6.8H13.5M3.9 9.1H13.2M3.6 11.4H12.9M3.3 13.5H12.7" stroke="#c8eef8" stroke-width="1"/><path d="M5 2.5H14.2L12.6 14.8H1.2Z" fill="none" stroke="#6ab0c8" stroke-width="0.6"/><path d="M5.5 2H13.5" stroke="#333" stroke-width="1.4" stroke-dasharray="1.2 0.9"/></svg><div class="t ui" style="left:1532px;top:749px;color:#1a1a1a">obj.h - Not Defteri</div><div class="a" style="left:1510px;top:767px;width:420px;height:20px;background:linear-gradient(#fdfdff 0%,#f4f5fb 30%,#dfe3f3 50%,#dde1f2 100%);border-bottom:1px solid #b9c0d2;box-sizing:border-box"></div><div class="t ui" style="left:1517px;top:770px;color:#6a6a6a">Dosya</div><div class="t ui" style="left:1563px;top:770px;color:#6a6a6a">Düzen</div><div class="t ui" style="left:1610px;top:770px;color:#6a6a6a">Biçim</div><div class="t ui" style="left:1654px;top:770px;color:#6a6a6a">Görünüm</div><div class="t ui" style="left:1719px;top:770px;color:#6a6a6a">Yardım</div><div class="a" style="left:1510px;top:787px;width:420px;height:262px;background:#fff;border-top:1px solid #828790;border-left:1px solid #828790;box-sizing:border-box"></div><div class="a" style="left:1617px;top:946px;width:88px;height:14px;background:#3399ff"></div><div class="a" style="left:1513px;top:791px;width:406px;height:250px;overflow:hidden;font-family:'Liberation Mono',monospace;font-size:13.33px;color:#000;line-height:13px;white-space:pre">/* definitions for relocatable object modules (.o files) */

#define OBJ_MAGIC   0x252A2131

struct obj_header
{
    int      magic;
    unsigned text_bytes;
    unsigned data_bytes;
    unsigned nr_symbols;
    unsigned nr_relocs;
    unsigned name_bytes;
    unsigned <span style="color:#fff">reserved[2]</span>;
};

#define OBJ_SYMBOL_GLOBAL       0x80000000
#define OBJ_SYMBOL_DEFINED      0x40000000

#define OBJ_SYMBOL_SEG_ABS      0x00000000
#define OBJ_SYMBOL_SEG_TEXT     0x00000010</div><div class="a" style="left:0px;top:0px;width:839px;height:916px;box-sizing:border-box;border:1px solid #3a4550;border-radius:6px 6px 0 0;background:linear-gradient(#bccfe3 0px,#c6d6e8 12px,#d3e0ee 28px,#d7e3f0 60px,#d7e3f0);box-shadow:inset 0 0 0 1px rgba(255,255,255,0.35)"></div><svg class="a" style="left:9px;top:9px" width="18" height="19" viewBox="0 0 17 18"><path d="M6 17.5 Q7 12 6 10 L11.5 9 Q12.5 14 15.5 17.5Z" fill="#caa282"/><path d="M2.5 3 Q5 -0.5 10 0.8 Q14 1.8 15.2 5 Q16.5 7 15.5 9.5 Q15 12 13 12.5 Q14.5 15 13.5 16.5 Q11.5 13 10.8 10 Q9.5 6 7.5 4.5 Q5 3.5 3 6.5 Q1.5 5 2.5 3Z" fill="#1c120c"/><ellipse cx="6.6" cy="8" rx="3.6" ry="4.6" fill="#dcb898"/><path d="M4.2 11 Q5 12 6 11.5" stroke="#a05040" stroke-width="0.9" fill="none"/><path d="M3.5 7.2H5.2M6.8 7H8.6" stroke="#8a6a5a" stroke-width="0.7"/></svg><div class="t ui" style="left:28px;top:12px;color:#1a1a1a">IDA - C:\Users\Erdoğan\Desktop\sample2.idb (sample2.o)</div><div class="a" style="left:732px;top:10px;width:30px;height:17px;border:1px solid #6e7f9c;border-radius:3px;box-sizing:border-box;background:linear-gradient(rgba(255,255,255,0.10),rgba(255,255,255,0.18));box-shadow:inset 0 0 0 1px rgba(255,255,255,0.35)"><svg class="a" style="left:9px;top:7px" width="12" height="6"><rect x="0.5" y="0.5" width="10.5" height="4.5" rx="1.5" fill="#f2f2f2" stroke="#333" stroke-width="1"/></svg></div><div class="a" style="left:765px;top:10px;width:30px;height:17px;border:1px solid #6e7f9c;border-radius:3px;box-sizing:border-box;background:linear-gradient(rgba(255,255,255,0.10),rgba(255,255,255,0.18));box-shadow:inset 0 0 0 1px rgba(255,255,255,0.35)"><svg class="a" style="left:9px;top:3px" width="12" height="10"><rect x="0.5" y="0.5" width="10" height="8.5" rx="1.5" fill="#f4f4f4" stroke="#333" stroke-width="1"/><rect x="3" y="3" width="5" height="3" fill="#f4f4f4" stroke="#333" stroke-width="1"/></svg></div><div class="a" style="left:798px;top:10px;width:30px;height:17px;border:1px solid #6e7f9c;border-radius:3px;box-sizing:border-box;background:linear-gradient(rgba(255,255,255,0.10),rgba(255,255,255,0.18));box-shadow:inset 0 0 0 1px rgba(255,255,255,0.35)"><svg class="a" style="left:8px;top:2px" width="14" height="12"><path d="M3 2.5L11 9.5M11 2.5L3 9.5" stroke="#333" stroke-width="4.2" stroke-linecap="round"/><path d="M3 2.5L11 9.5M11 2.5L3 9.5" stroke="#fff" stroke-width="2" stroke-linecap="round"/></svg></div><div class="a" style="left:7px;top:30px;width:824px;height:878px;background:#f0f0f0"></div><div class="a" style="left:7px;top:30px;width:824px;height:21px;background:linear-gradient(#fdfdff 0%,#f4f5fb 30%,#dfe3f3 50%,#dde1f2 100%);border-bottom:1px solid #b9c0d2;box-sizing:border-box"></div><div class="t ui" style="left:15px;top:33px;color:#909090">File</div><div class="t ui" style="left:49px;top:33px;color:#909090">Edit</div><div class="t ui" style="left:84px;top:33px;color:#909090">Jump</div><div class="t ui" style="left:130px;top:33px;color:#909090">Search</div><div class="t ui" style="left:180px;top:33px;color:#909090">View</div><div class="t ui" style="left:221px;top:33px;color:#909090">Debugger</div><div class="t ui" style="left:289px;top:33px;color:#909090">Options</div><div class="t ui" style="left:347px;top:33px;color:#909090">Windows</div><div class="t ui" style="left:413px;top:33px;color:#909090">Help</div><div class="a" style="left:7px;top:51px;width:824px;height:26px;background:#f0f0f0;border-bottom:1px solid #d6d6d6;box-sizing:border-box"></div><div class="a" style="left:11px;top:55px;width:2px;height:19px;background:repeating-linear-gradient(#a0a0a0 0,#a0a0a0 2px,transparent 2px,transparent 4px)"></div><div class="a" style="left:69px;top:55px;width:2px;height:19px;background:repeating-linear-gradient(#a0a0a0 0,#a0a0a0 2px,transparent 2px,transparent 4px)"></div><div class="a" style="left:151px;top:55px;width:2px;height:19px;background:repeating-linear-gradient(#a0a0a0 0,#a0a0a0 2px,transparent 2px,transparent 4px)"></div><div class="a" style="left:320px;top:55px;width:2px;height:19px;background:repeating-linear-gradient(#a0a0a0 0,#a0a0a0 2px,transparent 2px,transparent 4px)"></div><div class="a" style="left:377px;top:55px;width:2px;height:19px;background:repeating-linear-gradient(#a0a0a0 0,#a0a0a0 2px,transparent 2px,transparent 4px)"></div><div class="a" style="left:562px;top:55px;width:2px;height:19px;background:repeating-linear-gradient(#a0a0a0 0,#a0a0a0 2px,transparent 2px,transparent 4px)"></div><div class="a" style="left:788px;top:55px;width:2px;height:19px;background:repeating-linear-gradient(#a0a0a0 0,#a0a0a0 2px,transparent 2px,transparent 4px)"></div><div class="a" style="left:64px;top:52px;width:1px;height:24px;background:#c8c8c8;border-right:1px solid #fff"></div><div class="a" style="left:146px;top:52px;width:1px;height:24px;background:#c8c8c8;border-right:1px solid #fff"></div><div class="a" style="left:314px;top:52px;width:1px;height:24px;background:#c8c8c8;border-right:1px solid #fff"></div><div class="a" style="left:372px;top:52px;width:1px;height:24px;background:#c8c8c8;border-right:1px solid #fff"></div><div class="a" style="left:557px;top:52px;width:1px;height:24px;background:#c8c8c8;border-right:1px solid #fff"></div><div class="a" style="left:783px;top:52px;width:1px;height:24px;background:#c8c8c8;border-right:1px solid #fff"></div><div class="a" style="left:228px;top:56px;width:1px;height:16px;background:#d4d4d4"></div><div class="a" style="left:257px;top:56px;width:1px;height:16px;background:#d4d4d4"></div><div class="a" style="left:286px;top:56px;width:1px;height:16px;background:#d4d4d4"></div><div class="a" style="left:733px;top:56px;width:1px;height:16px;background:#d4d4d4"></div><svg class="a" style="left:20px;top:55px" width="17" height="18"><path d="M1 6h5l1 1.5h6v2H4L1 17Z" fill="#e8b830" stroke="#b08010" stroke-width="0.8"/><path d="M4 9.5h12.5L13 17H1Z" fill="#fce35a" stroke="#c09018" stroke-width="0.8"/><path d="M8 6 Q9 2 13 2.5 L12.5 0.5 L16 3.5 L12.5 6 L12.8 4.2 Q10 4 8 6Z" fill="#1a6ae8"/></svg><svg class="a" style="left:44px;top:56px" width="16" height="16"><path d="M0.5 0.5h15v15h-15z" fill="#7a28d8" stroke="#5a10b0"/><rect x="2.5" y="1.5" width="11" height="6" fill="#f4e4ec"/><rect x="3.5" y="10" width="8" height="5" fill="#eef0ff"/><rect x="5" y="11" width="2" height="3.5" fill="#5a10b0"/></svg><svg class="a" style="left:78px;top:57px" width="16" height="13"><path d="M1 6.5L7 1V4H15V9H7V12Z" fill="#a8a8a8" stroke="#6a6a6a" stroke-width="0.9"/></svg><svg class="a" style="left:100px;top:62px" width="8" height="5"><path d="M0 0H8L4 4.5Z" fill="#606060"/></svg><svg class="a" style="left:114px;top:57px" width="16" height="13"><path d="M15 6.5L9 1V4H1V9H9V12Z" fill="#a8a8a8" stroke="#6a6a6a" stroke-width="0.9"/></svg><svg class="a" style="left:135px;top:62px" width="8" height="5"><path d="M0 0H8L4 4.5Z" fill="#606060"/></svg><svg class="a" style="left:160px;top:55px" width="18" height="18"><rect x="1" y="1" width="3.5" height="3" fill="#3a6ad0"/><rect x="5.5" y="1" width="3.5" height="3" fill="#3a6ad0"/><rect x="0.5" y="4" width="4.5" height="7" rx="1" fill="#2a5ac8" stroke="#103080" stroke-width="0.6"/><rect x="5" y="4" width="4.5" height="7" rx="1" fill="#2a5ac8" stroke="#103080" stroke-width="0.6"/><rect x="7" y="7.5" width="10" height="9.5" fill="#fff" stroke="#1a3a90" stroke-width="1.2"/></svg><div class="a" style="left:167px;top:63px;width:10px;height:9px;font:bold 9px/9px 'Liberation Sans';color:#102a70;text-align:center">#</div><svg class="a" style="left:183px;top:55px" width="18" height="18"><rect x="1" y="1" width="3.5" height="3" fill="#3a6ad0"/><rect x="5.5" y="1" width="3.5" height="3" fill="#3a6ad0"/><rect x="0.5" y="4" width="4.5" height="7" rx="1" fill="#2a5ac8" stroke="#103080" stroke-width="0.6"/><rect x="5" y="4" width="4.5" height="7" rx="1" fill="#2a5ac8" stroke="#103080" stroke-width="0.6"/><rect x="7" y="7.5" width="10" height="9.5" fill="#fff" stroke="#1a3a90" stroke-width="1.2"/></svg><div class="a" style="left:190px;top:63px;width:10px;height:9px;font:bold 9px/9px 'Liberation Sans';color:#102a70;text-align:center">T</div><svg class="a" style="left:206px;top:55px" width="18" height="18"><rect x="1" y="1" width="3.5" height="3" fill="#3a6ad0"/><rect x="5.5" y="1" width="3.5" height="3" fill="#3a6ad0"/><rect x="0.5" y="4" width="4.5" height="7" rx="1" fill="#2a5ac8" stroke="#103080" stroke-width="0.6"/><rect x="5" y="4" width="4.5" height="7" rx="1" fill="#2a5ac8" stroke="#103080" stroke-width="0.6"/><rect x="7" y="7.5" width="10" height="9.5" fill="#fff" stroke="#1a3a90" stroke-width="1.2"/></svg><div class="a" style="left:213px;top:63px;width:10px;height:9px;font:bold 6.5px/9px 'Liberation Sans';color:#102a70;text-align:center">101</div><svg class="a" style="left:234px;top:55px" width="19" height="18"><rect x="0.5" y="3" width="4.5" height="7" rx="1" fill="#b0b0b0" stroke="#808080" stroke-width="0.6"/><rect x="5" y="3" width="4.5" height="7" rx="1" fill="#b0b0b0" stroke="#808080" stroke-width="0.6"/><path d="M4 9H11V6L18 11L11 16V13H4Z" fill="#b8b8b8" stroke="#7a7a7a" stroke-width="0.8"/></svg><svg class="a" style="left:265px;top:55px" width="14" height="18"><path d="M1 1 Q9 1 9.5 9 L9.5 10 L13 10 L7 17.5 L1 10 L4.5 10 L4.5 8 Q4.5 4 1 4Z" fill="#1a6ae8" stroke="#0a3ab0" stroke-width="0.6"/></svg><svg class="a" style="left:292px;top:55px" width="18" height="18"><path d="M1 16 L11 5" stroke="#c8c8c8" stroke-width="3"/><rect x="10" y="10" width="7" height="6" fill="#e0e0e0" stroke="#a0a0a0"/><path d="M11.5 10V8 Q13.5 5.5 15.5 8V10" fill="none" stroke="#a0a0a0"/></svg><svg class="a" style="left:328px;top:56px" width="16" height="16"><rect x="0.5" y="0.5" width="15" height="15" fill="#f8fbff" stroke="#2a6ad8"/><rect x="1" y="1" width="14" height="2" fill="#4a8ae8"/><path d="M8 4.5L13.5 13.5H2.5Z" fill="#e01818"/><rect x="7.4" y="7" width="1.2" height="3.5" fill="#fff"/><rect x="7.4" y="11.2" width="1.2" height="1.2" fill="#fff"/></svg><div class="a" style="left:352px;top:57px;width:15px;height:15px;border-radius:50%;background:radial-gradient(circle at 45% 35%,#c8f8b8 0,#40c030 45%,#108010 100%)"></div><div class="a" style="left:386px;top:62px;width:16px;height:10px;background:#eef4f8;border:1px solid #708090;box-sizing:border-box;font:bold 5.5px/9px 'Liberation Sans';color:#103050;text-align:center;letter-spacing:-0.2px">CODE</div><svg class="a" style="left:393px;top:55px" width="10" height="10"><path d="M5 0.5V9.5M0.5 5H9.5" stroke="#103a10" stroke-width="3.6"/><path d="M5 1.2V8.8M1.2 5H8.8" stroke="#30c030" stroke-width="2"/></svg><div class="a" style="left:409px;top:62px;width:16px;height:10px;background:#1a4ac0;border:1px solid #0a2a80;box-sizing:border-box;font:bold 5.5px/9px 'Liberation Sans';color:#fff;text-align:center;letter-spacing:-0.2px">DATA</div><svg class="a" style="left:417px;top:55px" width="10" height="10"><path d="M5 0.5V9.5M0.5 5H9.5" stroke="#103a10" stroke-width="3.6"/><path d="M5 1.2V8.8M1.2 5H8.8" stroke="#30c030" stroke-width="2"/></svg><div class="a" style="left:432px;top:62px;width:11px;height:10px;background:#f4f8fc;border:1px solid #6a8aaa;box-sizing:border-box;font:bold 8px/9px 'Liberation Sans';color:#1a3a80;text-align:center">A</div><svg class="a" style="left:440px;top:55px" width="10" height="10"><path d="M5 0.5V9.5M0.5 5H9.5" stroke="#103a10" stroke-width="3.6"/><path d="M5 1.2V8.8M1.2 5H8.8" stroke="#30c030" stroke-width="2"/></svg><div class="a" style="left:453px;top:58px;width:14px;height:14px;font:bold 12px/14px 'Liberation Serif';color:#2a9a2a;text-align:center">‘s’</div><svg class="a" style="left:462px;top:55px" width="10" height="10"><path d="M5 0.5V9.5M0.5 5H9.5" stroke="#103a10" stroke-width="3.6"/><path d="M5 1.2V8.8M1.2 5H8.8" stroke="#30c030" stroke-width="2"/></svg><svg class="a" style="left:477px;top:63px" width="8" height="5"><path d="M0 0H8L4 4.5Z" fill="#202020"/></svg><svg class="a" style="left:490px;top:58px" width="14" height="14"><path d="M7 1V13M1.8 4L12.2 10M12.2 4L1.8 10" stroke="#2a50e0" stroke-width="2.4" stroke-linecap="round"/></svg><svg class="a" style="left:497px;top:55px" width="10" height="10"><path d="M5 0.5V9.5M0.5 5H9.5" stroke="#103a10" stroke-width="3.6"/><path d="M5 1.2V8.8M1.2 5H8.8" stroke="#30c030" stroke-width="2"/></svg><svg class="a" style="left:513px;top:55px" width="17" height="18"><rect x="0.5" y="6.5" width="15" height="10" fill="#2040b0" stroke="#10208a"/><rect x="2.5" y="8.5" width="11" height="6" fill="#3a60d8"/><path d="M4 12 L13 3" stroke="#f0b830" stroke-width="2.6"/><path d="M13 3 L15 1" stroke="#4a90e0" stroke-width="2.6"/></svg><svg class="a" style="left:537px;top:56px" width="16" height="16"><path d="M2 2L14 14M14 2L2 14" stroke="#e01010" stroke-width="2.8"/></svg><svg class="a" style="left:574px;top:57px" width="12" height="14"><path d="M1 1L11 7L1 13Z" fill="#c0c0c0" stroke="#909090"/></svg><div class="a" style="left:595px;top:57px;width:14px;height:14px;border-radius:3px;background:linear-gradient(#b8b8b8,#8a8a8a);border:1px solid #6a6a6a;box-sizing:border-box"><div class="a" style="left:3px;top:3px;width:2px;height:7px;background:#fff"></div><div class="a" style="left:7px;top:3px;width:2px;height:7px;background:#fff"></div></div><div class="a" style="left:618px;top:57px;width:14px;height:14px;border-radius:3px;background:linear-gradient(#b8b8b8,#8a8a8a);border:1px solid #6a6a6a;box-sizing:border-box"><div class="a" style="left:3px;top:3px;width:7px;height:7px;background:#fff"></div></div><svg class="a" style="left:737px;top:55px" width="18" height="18"><path d="M1 3H7V1L11 5L7 9V7H1Z" fill="#c0c0c0" stroke="#909090" stroke-width="0.6"/><rect x="6" y="7" width="10" height="10" fill="#f0f0f0" stroke="#a0a0a0"/><text x="11" y="15.5" font-family="Liberation Sans" font-size="9" font-weight="bold" fill="#909090" text-anchor="middle">c</text></svg><svg class="a" style="left:760px;top:55px" width="18" height="18"><rect x="1" y="6" width="10" height="11" fill="#e8f0ff" stroke="#2a60c0"/><text x="6" y="15" font-family="Liberation Sans" font-size="10" font-weight="bold" fill="#1a50c0" text-anchor="middle">c</text><path d="M9 1V9L16 5Z" fill="#30b030"/></svg><svg class="a" style="left:801px;top:55px" width="17" height="18"><rect x="0.5" y="3.5" width="14" height="13" fill="#e8f0ff" stroke="#2a60c0"/><path d="M3 7H9M3 10H9M3 13H9" stroke="#2a60c0"/><rect x="10" y="6" width="3" height="9" fill="#808080"/><circle cx="11.5" cy="4.5" r="3.2" fill="#e01818"/></svg><div class="a" style="left:637px;top:54px;width:91px;height:19px;background:linear-gradient(#f8f8f8,#e4e4e4);border:1px solid #8a8a8a;border-radius:2px;box-sizing:border-box"></div><div class="t ui" style="left:640px;top:56px;color:#000;font-size:11px">No debugger</div><svg class="a" style="left:715px;top:61px" width="8" height="5"><path d="M0 0H8L4 4.5Z" fill="#000"/></svg><div class="t ui" style="left:818px;top:56px;color:#000;font-weight:bold;font-size:13px">»</div><div class="a" style="left:7px;top:77px;width:824px;height:50px;background:#f0f0f0"></div><div class="a" style="left:13px;top:79px;width:2px;height:46px;border-left:2px dotted #a8a8a8"></div><div class="a" style="left:7px;top:77px;width:10px;height:50px;border-right:1px solid #c8c8c8;border-bottom:1px solid #c8c8c8;box-sizing:border-box"></div><div class="a" style="left:29px;top:80px;width:32px;height:19px;background:#c0c0c0"></div><svg class="a" style="left:42px;top:81px" width="8" height="9"><path d="M2 0h4v4h2l-4 4-4-4h2z" fill="#ffe040"/></svg><div class="a" style="left:61px;top:80px;width:25px;height:19px;background:#c08060"></div><div class="a" style="left:86px;top:80px;width:23px;height:19px;background:#c0c0c0"></div><div class="a" style="left:109px;top:80px;width:127px;height:19px;background:#b0b070"></div><div class="a" style="left:236px;top:80px;width:446px;height:19px;background:#000"></div><svg class="a" style="left:23px;top:83px" width="4" height="14"><path d="M0 3h3L1.5 1z M0 9h3L1.5 12z" fill="#333"/></svg><div class="a" style="left:684px;top:82px;width:2px;height:14px;border-left:1px dotted #555"></div><div class="a" style="left:696px;top:80px;width:131px;height:19px;background:linear-gradient(#f6f6f6,#e2e2e2);border:1px solid #9a9a9a;border-radius:3px;box-sizing:border-box"></div><svg class="a" style="left:813px;top:86px" width="9" height="6"><path d="M0 0H9L4.5 5Z" fill="#000"/></svg><div class="a" style="left:20px;top:112px;width:13px;height:13px;background:#a8f4fc"></div><div class="t ui" style="left:38px;top:111px;color:#000;font-size:11px">Library function</div><div class="a" style="left:120px;top:112px;width:13px;height:13px;background:#c0c0c0"></div><div class="t ui" style="left:138px;top:111px;color:#000;font-size:11px">Data</div><div class="a" style="left:168px;top:112px;width:13px;height:13px;background:#00a0e8"></div><div class="t ui" style="left:186px;top:111px;color:#000;font-size:11px">Regular function</div><div class="a" style="left:272px;top:112px;width:13px;height:13px;background:#b0b070"></div><div class="t ui" style="left:290px;top:111px;color:#000;font-size:11px">Unexplored</div><div class="a" style="left:352px;top:112px;width:13px;height:13px;background:#c08060"></div><div class="t ui" style="left:370px;top:111px;color:#000;font-size:11px">Instruction</div><div class="a" style="left:429px;top:112px;width:13px;height:13px;background:#ffa8ff"></div><div class="t ui" style="left:447px;top:111px;color:#000;font-size:11px">External symbol</div><div class="a" style="left:7px;top:155px;width:824px;height:1px;background:#a0a0a0"></div><div class="a" style="left:7px;top:131px;width:120px;height:25px;background:#fff;border:1px solid #a0a0a0;border-bottom:none;box-sizing:border-box"></div><svg class="a" style="left:19px;top:134px" width="16" height="16"><rect x="1.5" y="1.5" width="13" height="13" fill="#f4f8ff" stroke="#3070d0"/><rect x="1.5" y="1.5" width="13" height="2" fill="#3070d0"/><path d="M4 4H11M6 6.5H11M6 9H11M4 11.5H11" stroke="#1a3a70" stroke-width="1"/></svg><div class="t ui" style="left:38px;top:136px;color:#000;font-size:11px">IDA View-A</div><div class="a" style="left:97px;top:136px;width:14px;height:14px;background:linear-gradient(#f08868,#d85838);border:1px solid #b84828;border-radius:2px;box-sizing:border-box"><svg class="a" style="left:2px;top:2px" width="8" height="8"><path d="M1 1L7 7M7 1L1 7" stroke="#fff" stroke-width="1.8"/></svg></div><div class="a" style="left:128px;top:134px;width:115px;height:21px;background:linear-gradient(#f2f2f2,#e0e0e0);border:1px solid #a8a8a8;border-bottom:none;box-sizing:border-box"></div><svg class="a" style="left:138px;top:136px" width="16" height="16"><rect x="1.5" y="1.5" width="13" height="13" fill="#f4f8ff" stroke="#3070d0"/><rect x="1.5" y="1.5" width="13" height="2" fill="#3070d0"/><path d="M7.5 3.5L11 5.5V9.5L7.5 11.5L4 9.5V5.5Z" fill="none" stroke="#3050e0" stroke-width="1.2"/></svg><div class="t ui" style="left:156px;top:137px;color:#000;font-size:11px">Hex View-A</div><div class="a" style="left:215px;top:138px;width:14px;height:14px;background:#d0d0d0;border:1px solid #b0b0b0;border-radius:2px;box-sizing:border-box"><svg class="a" style="left:2px;top:2px" width="8" height="8"><path d="M1 1L7 7M7 1L1 7" stroke="#fff" stroke-width="1.8"/></svg></div><div class="a" style="left:245px;top:134px;width:116px;height:21px;background:linear-gradient(#f2f2f2,#e0e0e0);border:1px solid #a8a8a8;border-bottom:none;box-sizing:border-box"></div><svg class="a" style="left:255px;top:136px" width="16" height="16"><rect x="1.5" y="1.5" width="13" height="13" fill="#f4f8ff" stroke="#3070d0"/><rect x="1.5" y="1.5" width="13" height="2" fill="#3070d0"/><path d="M5 12L7.5 4L10 12M6 9H9" fill="none" stroke="#1a3a80" stroke-width="1.2"/><circle cx="7.5" cy="3.5" r="1" fill="#1a3a80"/></svg><div class="t ui" style="left:276px;top:137px;color:#000;font-size:11px">Structures</div><div class="a" style="left:333px;top:138px;width:14px;height:14px;background:#d0d0d0;border:1px solid #b0b0b0;border-radius:2px;box-sizing:border-box"><svg class="a" style="left:2px;top:2px" width="8" height="8"><path d="M1 1L7 7M7 1L1 7" stroke="#fff" stroke-width="1.8"/></svg></div><div class="a" style="left:362px;top:134px;width:115px;height:21px;background:linear-gradient(#f2f2f2,#e0e0e0);border:1px solid #a8a8a8;border-bottom:none;box-sizing:border-box"></div><svg class="a" style="left:372px;top:136px" width="16" height="16"><rect x="1.5" y="1.5" width="13" height="13" fill="#f4f8ff" stroke="#3070d0"/><rect x="1.5" y="1.5" width="13" height="2" fill="#3070d0"/><path d="M4 5H5M7 5H11M4 8H5M7 8H11M4 11H5M7 11H11" stroke="#1a3a80" stroke-width="1.2"/></svg><div class="t ui" style="left:403px;top:137px;color:#000;font-size:11px">Enums</div><div class="a" style="left:451px;top:138px;width:14px;height:14px;background:#d0d0d0;border:1px solid #b0b0b0;border-radius:2px;box-sizing:border-box"><svg class="a" style="left:2px;top:2px" width="8" height="8"><path d="M1 1L7 7M7 1L1 7" stroke="#fff" stroke-width="1.8"/></svg></div><div class="a" style="left:479px;top:134px;width:115px;height:21px;background:linear-gradient(#f2f2f2,#e0e0e0);border:1px solid #a8a8a8;border-bottom:none;box-sizing:border-box"></div><svg class="a" style="left:489px;top:136px" width="16" height="16"><rect x="1.5" y="1.5" width="13" height="13" fill="#f4f8ff" stroke="#3070d0"/><rect x="1.5" y="1.5" width="13" height="2" fill="#3070d0"/><path d="M4 6H11M4 9H11M4 12H11" stroke="#1a3a80" stroke-width="1"/><path d="M2 4L6 6L2 8Z" fill="#20a040"/></svg><div class="t ui" style="left:518px;top:137px;color:#000;font-size:11px">Imports</div><div class="a" style="left:568px;top:138px;width:14px;height:14px;background:#d0d0d0;border:1px solid #b0b0b0;border-radius:2px;box-sizing:border-box"><svg class="a" style="left:2px;top:2px" width="8" height="8"><path d="M1 1L7 7M7 1L1 7" stroke="#fff" stroke-width="1.8"/></svg></div><div class="a" style="left:596px;top:134px;width:115px;height:21px;background:linear-gradient(#f2f2f2,#e0e0e0);border:1px solid #a8a8a8;border-bottom:none;box-sizing:border-box"></div><svg class="a" style="left:606px;top:136px" width="16" height="16"><rect x="1.5" y="1.5" width="13" height="13" fill="#f4f8ff" stroke="#3070d0"/><rect x="1.5" y="1.5" width="13" height="2" fill="#3070d0"/><path d="M4 6H9M4 9H9M4 12H9" stroke="#1a3a80" stroke-width="1"/><path d="M8 3L13 6L8 9Z" fill="#20a040"/></svg><div class="t ui" style="left:635px;top:137px;color:#000;font-size:11px">Exports</div><div class="a" style="left:686px;top:138px;width:14px;height:14px;background:#d0d0d0;border:1px solid #b0b0b0;border-radius:2px;box-sizing:border-box"><svg class="a" style="left:2px;top:2px" width="8" height="8"><path d="M1 1L7 7M7 1L1 7" stroke="#fff" stroke-width="1.8"/></svg></div><div class="a" style="left:7px;top:156px;width:824px;height:604px;background:#fff"></div><div class="a" style="left:82px;top:156px;width:5px;height:621px;background:#f0f0f0;border-right:1px solid #a0a0a0;box-sizing:border-box"></div><div class="a" style="left:87px;top:157px;width:727px;height:1px;background:#a0a0a0"></div><div class="a m" style="left:88px;top:157px;font-size:13.33px;line-height:15px;font-weight:bold;white-space:pre"><span style="color:#808080">seg000:00000000</span><br><span style="color:#808080">seg000:00000000</span>                 <span style="color:#0000ff">.686p</span><br><span style="color:#808080">seg000:00000000</span>                 <span style="color:#0000ff">.mmx</span><br><span style="color:#808080">seg000:00000000</span>                 <span style="color:#0000ff">.model flat</span><br><span style="color:#808080">seg000:00000000</span><br><span style="color:#808080">seg000:00000000</span> <span style="color:#808080">; ==========================================================================</span><br><span style="color:#808080">seg000:00000000</span><br><span style="color:#808080">seg000:00000000</span> <span style="color:#808080">; Segment type: Pure code</span><br><span style="color:#808080">seg000:00000000</span> <span style="color:#0000ff">seg000</span>          <span style="color:#0000ff">segment byte public 'CODE' use32</span><br><span style="color:#808080">seg000:00000000</span>                 <span style="color:#0000ff">assume cs:seg000</span><br><span style="color:#808080">seg000:00000000</span>                 <span style="color:#0000ff">assume es:nothing, ss:nothing, ds:nothing, fs:nothing, gs:n</span><br><span style="color:#808080">seg000:00000000</span> <span style="color:#0000ff">OBJ_MAGIC</span>       <span style="color:#000080">dd </span><span style="color:#008000">252A2131h</span><br><span style="color:#808080">seg000:00000004</span>                 <span style="color:#000080">dd </span><span style="color:#008000">19h</span><br><span style="color:#808080">seg000:00000008</span>                 <span style="color:#000080">dd </span><span style="color:#008000">0Ch</span><br><span style="color:#808080">seg000:0000000C</span>                 <span style="color:#000080">dd </span><span style="color:#008000">6</span><br><span style="color:#0000ff">seg000:00000010</span>                 <span style="color:#000080">dd </span><span style="color:#008000">1</span><br><span style="color:#808080">seg000:00000014</span>                 <span style="color:#000080">dd </span><span style="color:#008000">27h</span><br><span style="color:#808080">seg000:00000018</span>                 <span style="color:#000080">dd </span><span style="color:#008000">0</span><br><span style="color:#808080">seg000:0000001C</span>                 <span style="color:#000080">dd </span><span style="color:#008000">0</span><br><span style="color:#800000">seg000:00000020</span> <span style="color:#808080">; --------------------------------------------------------------------------</span><br><span style="color:#800000">seg000:00000020</span><br><span style="color:#800000">seg000:00000020</span> <span style="color:#0000ff">_text:</span>                                  <span style="color:#0000ff">; LINUX -</span><br><span style="color:#800000">seg000:00000020</span>                 <span style="color:#000080">int     </span><span style="color:#008000">80h</span><br><span style="color:#800000">seg000:00000022</span>                 <span style="color:#000080">jmp     short </span><span style="color:#0000ff">open</span><br><span style="color:#800000">seg000:00000024</span> <span style="color:#808080">; --------------------------------------------------------------------------</span><br><span style="color:#800000">seg000:00000024</span><br><span style="color:#800000">seg000:00000024</span> <span style="color:#0000ff">kernel_2:</span><br><span style="color:#800000">seg000:00000024</span>                 <span style="color:#000080">retn</span><br><span style="color:#800000">seg000:00000025</span> <span style="color:#808080">; --------------------------------------------------------------------------</span><br><span style="color:#800000">seg000:00000025</span><br><span style="color:#800000">seg000:00000025</span> <span style="color:#0000ff">open:</span>                                   <span style="color:#008000">; CODE XREF: seg000:00000022</span><span style="color:#008000">↑j</span><br><span style="color:#800000">seg000:00000025</span>                 <span style="color:#000080">push    dword ptr [eax] </span><span style="color:#0000ff">; wrong opcodes !!!!</span><br><span style="color:#800000">seg000:00000027</span>                 <span style="color:#000080">push    dword ptr [eax]</span><br><span style="color:#800000">seg000:00000029</span>                 <span style="color:#000080">push    dword ptr [eax]</span><br><span style="color:#800000">seg000:0000002B</span>                 <span style="color:#000080">mov     eax, </span><span style="color:#008000">5</span><br><span style="color:#800000">seg000:00000030</span>                 <span style="color:#000080">call    $+</span><span style="color:#008000">5</span>             <span style="color:#0000ff">; wrong !</span><br><span style="color:#800000">seg000:00000035</span>                 <span style="color:#000080">add     dword ptr [eax], </span><span style="color:#008000">0Ch</span> <span style="color:#0000ff">; wrong !</span><br><span style="color:#800000">seg000:00000038</span>                 <span style="color:#000080">retn</span><br><span style="color:#800000">seg000:00000038</span> <span style="color:#808080">; --------------------------------------------------------------------------</span><br><span style="color:#808080">seg000:00000039</span>                 <span style="color:#000080">db </span><span style="color:#008000">7</span><span style="color:#000080"> dup(</span><span style="color:#008000">0</span><span style="color:#000080">)</span></div><div class="a" style="left:72px;top:323px;width:6px;height:6px;background:#4ac8f4;border-radius:50%"></div><div class="a" style="left:72px;top:338px;width:6px;height:6px;background:#4ac8f4;border-radius:50%"></div><div class="a" style="left:72px;top:353px;width:6px;height:6px;background:#4ac8f4;border-radius:50%"></div><div class="a" style="left:72px;top:368px;width:6px;height:6px;background:#4ac8f4;border-radius:50%"></div><div class="a" style="left:72px;top:383px;width:6px;height:6px;background:#4ac8f4;border-radius:50%"></div><div class="a" style="left:72px;top:398px;width:6px;height:6px;background:#4ac8f4;border-radius:50%"></div><div class="a" style="left:72px;top:413px;width:6px;height:6px;background:#4ac8f4;border-radius:50%"></div><div class="a" style="left:72px;top:428px;width:6px;height:6px;background:#4ac8f4;border-radius:50%"></div><div class="a" style="left:72px;top:488px;width:6px;height:6px;background:#4ac8f4;border-radius:50%"></div><div class="a" style="left:72px;top:503px;width:6px;height:6px;background:#4ac8f4;border-radius:50%"></div><div class="a" style="left:72px;top:563px;width:6px;height:6px;background:#4ac8f4;border-radius:50%"></div><div class="a" style="left:72px;top:623px;width:6px;height:6px;background:#4ac8f4;border-radius:50%"></div><div class="a" style="left:72px;top:638px;width:6px;height:6px;background:#4ac8f4;border-radius:50%"></div><div class="a" style="left:72px;top:653px;width:6px;height:6px;background:#4ac8f4;border-radius:50%"></div><div class="a" style="left:72px;top:668px;width:6px;height:6px;background:#4ac8f4;border-radius:50%"></div><div class="a" style="left:72px;top:683px;width:6px;height:6px;background:#4ac8f4;border-radius:50%"></div><div class="a" style="left:72px;top:698px;width:6px;height:6px;background:#4ac8f4;border-radius:50%"></div><div class="a" style="left:72px;top:713px;width:6px;height:6px;background:#4ac8f4;border-radius:50%"></div><div class="a" style="left:72px;top:743px;width:6px;height:6px;background:#4ac8f4;border-radius:50%"></div><div class="a" style="left:62px;top:509px;width:16px;height:1px;background:#e00000"></div><div class="a" style="left:62px;top:509px;width:1px;height:117px;background:#e00000"></div><svg class="a" style="left:62px;top:621px" width="9" height="9"><path d="M0 4.5H5M4 1L8 4.5L4 8Z" fill="#e00000" stroke="#e00000"/></svg><div class="a" style="left:814px;top:157px;width:17px;height:622px;background:#f0f0f0;border-left:1px solid #e6e6e6;box-sizing:border-box"></div><div class="a" style="left:815px;top:174px;width:14px;height:93px;background:linear-gradient(90deg,#f2f2f2,#dcdcdc);border:1px solid #a8a8a8;border-radius:2px;box-sizing:border-box"></div><svg class="a" style="left:818px;top:162px" width="8" height="5"><path d="M0 4.5L4 0L8 4.5Z" fill="#505050"/></svg><svg class="a" style="left:819px;top:768px" width="8" height="5"><path d="M0 0L4 4.5L8 0Z" fill="#505050"/></svg><div class="a" style="left:818px;top:216px;width:7px;height:5px;border-top:1px solid #777;border-bottom:1px solid #777"></div><div class="a" style="left:87px;top:759px;width:727px;height:20px;background:#efefef"></div><div class="t m" style="left:89px;top:762px;font-size:11.5px;color:#000;line-height:15px">00000010 00000010: seg000:00000010</div><div class="a" style="left:146px;top:762px;width:1px;height:14px;background:#c8c8c8"></div><div class="a" style="left:327px;top:762px;width:1px;height:14px;background:#c8c8c8"></div><div class="a" style="left:87px;top:779px;width:744px;height:18px;background:#ececec;border-bottom:1px solid #8a96a6;border-right:1px solid #8a96a6;box-sizing:border-box"></div><div class="a" style="left:106px;top:780px;width:330px;height:15px;background:linear-gradient(#f2f2f2,#d8d8d8);border:1px solid #a8a8a8;border-radius:2px;box-sizing:border-box"></div><svg class="a" style="left:93px;top:783px" width="5" height="8"><path d="M4.5 0L0 4L4.5 8Z" fill="#505050"/></svg><svg class="a" style="left:803px;top:783px" width="5" height="8"><path d="M0 0L4.5 4L0 8Z" fill="#505050"/></svg><div class="a" style="left:266px;top:783px;width:5px;height:7px;border-left:1px solid #777;border-right:1px solid #777"></div><div class="a" style="left:7px;top:756px;width:75px;height:41px;background:#fff"></div><div class="a" style="left:7px;top:797px;width:824px;height:111px;background:#f0f0f0"></div><div class="a" style="left:8px;top:802px;width:823px;height:21px;background:#f0f0f0;border:1px solid #c8c8c8;box-sizing:border-box"></div><svg class="a" style="left:12px;top:804px" width="16" height="16"><rect x="1.5" y="1.5" width="13" height="13" fill="#f4f8ff" stroke="#3060b0"/><rect x="1.5" y="1.5" width="13" height="2" fill="#3080e0"/><path d="M4 6H12M4 8.5H12M4 11H12" stroke="#3a4a70" stroke-width="1"/></svg><div class="t ui" style="left:32px;top:805px;color:#000;font-size:11px">Output window</div><div class="a" style="left:768px;top:807px;width:10px;height:9px;border:1px solid #000;border-top-width:2px;box-sizing:border-box"></div><div class="a" style="left:794px;top:806px;width:7px;height:6px;border:1px solid #000;border-top-width:2px;box-sizing:border-box"></div><div class="a" style="left:791px;top:809px;width:7px;height:6px;border:1px solid #000;border-top-width:2px;box-sizing:border-box;background:#f0f0f0"></div><svg class="a" style="left:812px;top:806px" width="10" height="10"><path d="M1.5 1.5L8.5 8.5M8.5 1.5L1.5 8.5" stroke="#000" stroke-width="1.5"/></svg><div class="a" style="left:8px;top:825px;width:823px;height:36px;background:#fff;border-top:1px solid #c0c0c0;box-sizing:border-box"></div><div class="t m" style="left:13px;top:829px;font-size:13.33px;font-weight:bold;color:#000;line-height:15px">IDAPython v1.6.0 final (serial 0) (c) The IDAPython Team &lt;idapython@googlegroups.com&gt;</div><div class="t m" style="left:13px;top:843px;font-size:13.33px;font-weight:bold;color:#000;line-height:15px">--------------------------------------------------------------------------------------</div><div class="a" style="left:814px;top:826px;width:17px;height:34px;background:#f4f4f4"></div><svg class="a" style="left:818px;top:832px" width="8" height="5"><path d="M0 4.5L4 0L8 4.5Z" fill="#505050"/></svg><svg class="a" style="left:818px;top:850px" width="8" height="5"><path d="M0 0L4 4.5L8 0Z" fill="#505050"/></svg><div class="a" style="left:9px;top:865px;width:45px;height:21px;background:linear-gradient(#f6f6f6,#dedede);border:1px solid #707070;border-radius:3px;box-sizing:border-box"></div><div class="t ui" style="left:14px;top:868px;color:#000;font-size:11px">Python</div><div class="a" style="left:59px;top:864px;width:771px;height:22px;background:#fff;border:1px solid #e0e0e0;border-radius:2px;box-sizing:border-box"></div><div class="t m" style="left:9px;top:892px;font-size:12px;color:#000">AU:  idle</div><div class="a" style="left:87px;top:890px;width:1px;height:16px;background:#d0d0d0"></div><div class="t m" style="left:92px;top:892px;font-size:12px;color:#000">Down</div><div class="a" style="left:162px;top:890px;width:1px;height:16px;background:#d0d0d0"></div><div class="t m" style="left:168px;top:892px;font-size:12px;color:#000">Disk: 11GB</div><div class="a" style="left:239px;top:890px;width:1px;height:16px;background:#d0d0d0"></div><svg class="a" style="left:820px;top:897px" width="10" height="10"><path d="M8 2h1v1h-1zM5 5h1v1h-1zM8 5h1v1h-1zM2 8h1v1h-1zM5 8h1v1h-1zM8 8h1v1h-1z" fill="#a0a0a0"/></svg><div class="a" style="left:5px;top:915px;width:654px;height:140px;box-sizing:border-box;border:1px solid #3a4550;border-radius:6px 6px 0 0;background:linear-gradient(#bccfe3 0px,#c6d6e8 12px,#d3e0ee 28px,#d7e3f0 60px,#d7e3f0);box-shadow:inset 0 0 0 1px rgba(255,255,255,0.35)"></div><svg class="a" style="left:15px;top:923px" width="17" height="18"><rect x="4" y="2.5" width="11" height="14" fill="#fff"/><path d="M15.3 2.5V16.8H4.5" fill="none" stroke="#9a8050" stroke-width="1.3"/><path d="M5 2.5H14.2L12.6 14.8H1.2Z" fill="#8ccbe0"/><path d="M4.6 4.5H13.8M4.2 6.8H13.5M3.9 9.1H13.2M3.6 11.4H12.9M3.3 13.5H12.7" stroke="#c8eef8" stroke-width="1"/><path d="M5 2.5H14.2L12.6 14.8H1.2Z" fill="none" stroke="#6ab0c8" stroke-width="0.6"/><path d="M5.5 2H13.5" stroke="#333" stroke-width="1.4" stroke-dasharray="1.2 0.9"/></svg><div class="t ui" style="left:35px;top:926px;color:#1a1a1a">nas.bat - Not Defteri</div><div class="a" style="left:553px;top:925px;width:30px;height:18px;border:1px solid #6e7f9c;border-radius:3px;box-sizing:border-box;background:linear-gradient(rgba(255,255,255,0.10),rgba(255,255,255,0.18));box-shadow:inset 0 0 0 1px rgba(255,255,255,0.35)"><svg class="a" style="left:9px;top:8px" width="12" height="6"><rect x="0.5" y="0.5" width="10.5" height="4.5" rx="1.5" fill="#f2f2f2" stroke="#333" stroke-width="1"/></svg></div><div class="a" style="left:586px;top:925px;width:30px;height:18px;border:1px solid #6e7f9c;border-radius:3px;box-sizing:border-box;background:linear-gradient(rgba(255,255,255,0.10),rgba(255,255,255,0.18));box-shadow:inset 0 0 0 1px rgba(255,255,255,0.35)"><svg class="a" style="left:9px;top:3px" width="12" height="10"><rect x="0.5" y="0.5" width="10" height="8.5" rx="1.5" fill="#f4f4f4" stroke="#333" stroke-width="1"/><rect x="3" y="3" width="5" height="3" fill="#f4f4f4" stroke="#333" stroke-width="1"/></svg></div><div class="a" style="left:619px;top:925px;width:30px;height:18px;border:1px solid #6e7f9c;border-radius:3px;box-sizing:border-box;background:linear-gradient(rgba(255,255,255,0.10),rgba(255,255,255,0.18));box-shadow:inset 0 0 0 1px rgba(255,255,255,0.35)"><svg class="a" style="left:8px;top:2px" width="14" height="12"><path d="M3 2.5L11 9.5M11 2.5L3 9.5" stroke="#333" stroke-width="4.2" stroke-linecap="round"/><path d="M3 2.5L11 9.5M11 2.5L3 9.5" stroke="#fff" stroke-width="2" stroke-linecap="round"/></svg></div><div class="a" style="left:13px;top:945px;width:636px;height:20px;background:linear-gradient(#fdfdff 0%,#f4f5fb 30%,#dfe3f3 50%,#dde1f2 100%);border-bottom:1px solid #b9c0d2;box-sizing:border-box"></div><div class="t ui" style="left:20px;top:948px;color:#6a6a6a">Dosya</div><div class="t ui" style="left:66px;top:948px;color:#6a6a6a">Düzen</div><div class="t ui" style="left:113px;top:948px;color:#6a6a6a">Biçim</div><div class="t ui" style="left:157px;top:948px;color:#6a6a6a">Görünüm</div><div class="t ui" style="left:222px;top:948px;color:#6a6a6a">Yardım</div><div class="a" style="left:13px;top:965px;width:636px;height:90px;background:#fff;border-top:1px solid #828790;border-left:1px solid #828790;box-sizing:border-box"></div><div class="a" style="left:16px;top:968px;width:614px;height:20px;overflow:hidden;font-family:'Liberation Mono',monospace;font-size:13.33px;color:#000;line-height:13px;white-space:pre">gcc -Wno-implicit-int -Wno-implicit-function-declaration -o nas.exe nas.c input.c</div><div class="a" style="left:631px;top:966px;width:17px;height:80px;background:linear-gradient(90deg,#e8e8e8,#f4f4f4)"></div><svg class="a" style="left:636px;top:971px" width="8" height="5"><path d="M0 4.5L4 0L8 4.5Z" fill="#a0a0a0"/></svg><div class="a" style="left:0;top:1040px;width:1919px;height:39px;background:linear-gradient(90deg,#8ca3be 0%,#9fb7d3 3%,#a8c0dc 6%,#a8c0dc 85.5%,#9ab0cb 87%,#8a9cb5 89%,#8799b2 100%)"></div><div class="a" style="left:0;top:1040px;width:1919px;height:14px;background:linear-gradient(rgba(255,255,255,0.14),rgba(255,255,255,0))"></div><div class="a" style="left:0;top:1040px;width:1919px;height:1px;background:rgba(40,60,90,0.55)"></div><div class="a" style="left:9px;top:1042px;width:36px;height:36px;border-radius:50%;background:radial-gradient(circle at 50% 30%,#bfe6fa 0%,#3a9ad8 35%,#0e4e92 70%,#0a2a5a 100%);box-shadow:0 0 0 1px #1a3a6a inset"></div><div class="a" style="left:11px;top:1064px;width:32px;height:13px;border-radius:0 0 16px 16px;background:radial-gradient(ellipse at 50% 100%,#30d8ff 0%,rgba(40,160,230,0) 70%)"></div><svg class="a" style="left:16px;top:1049px" width="23" height="22"><path d="M2.5 4.5 Q6 2.5 10.5 4 L9.5 10.5 Q5.5 9 1.5 11Z" fill="#f06a28"/><path d="M12 4.2 Q16 5.8 21 3.6 L19.8 10.2 Q15.5 12 11 10.6Z" fill="#8cc63a"/><path d="M1.2 12.2 Q5 10.2 9.2 11.8 L8.2 18.3 Q4.5 16.8 0.2 18.8Z" fill="#38a8ec"/><path d="M10.8 12.1 Q15 13.6 19.6 11.6 L18.5 18.2 Q14 20 9.8 18.5Z" fill="#fcc62a"/></svg><svg class="a" style="left:72px;top:1043px" width="36" height="34"><defs><linearGradient id="ieg" x1="0" y1="0" x2="0" y2="1"><stop offset="0" stop-color="#8adcff"/><stop offset="1" stop-color="#1a86d8"/></linearGradient></defs><ellipse cx="18" cy="17" rx="16.5" ry="8.5" fill="none" stroke="#f6bc22" stroke-width="2.6" transform="rotate(-38 18 17)"/><circle cx="18.5" cy="18.5" r="10" fill="none" stroke="url(#ieg)" stroke-width="6" stroke-dasharray="0 8 55 0"/><rect x="11" y="16.6" width="15.5" height="4.2" fill="#3aa4ec"/></svg><div class="a" style="left:121px;top:1041px;width:51px;height:38px;background:linear-gradient(rgba(255,255,255,0.50),rgba(255,255,255,0.18));border:1px solid rgba(50,70,100,0.55);border-radius:3px;box-sizing:border-box;box-shadow:inset 0 0 0 1px rgba(255,255,255,0.45)"></div><div class="a" style="left:370px;top:1041px;width:58px;height:38px;background:linear-gradient(rgba(255,240,240,0.55),rgba(230,190,200,0.30));border:2px solid #e07080;border-radius:3px;box-sizing:border-box"></div><div class="a" style="left:432px;top:1041px;width:58px;height:38px;background:linear-gradient(rgba(255,255,255,0.50),rgba(255,255,255,0.18));border:1px solid rgba(50,70,100,0.55);border-radius:3px;box-sizing:border-box;box-shadow:inset 0 0 0 1px rgba(255,255,255,0.45)"></div><div class="a" style="left:494px;top:1041px;width:58px;height:38px;background:linear-gradient(rgba(255,255,255,0.50),rgba(255,255,255,0.18));border:1px solid rgba(50,70,100,0.55);border-radius:3px;box-sizing:border-box;box-shadow:inset 0 0 0 1px rgba(255,255,255,0.45)"></div><div class="a" style="left:556px;top:1041px;width:58px;height:38px;background:linear-gradient(rgba(255,255,255,0.50),rgba(255,255,255,0.18));border:1px solid rgba(50,70,100,0.55);border-radius:3px;box-sizing:border-box;box-shadow:inset 0 0 0 1px rgba(255,255,255,0.45)"></div><div class="a" style="left:618px;top:1041px;width:49px;height:38px;background:linear-gradient(rgba(255,255,255,0.50),rgba(255,255,255,0.18));border:1px solid rgba(50,70,100,0.55);border-radius:3px;box-sizing:border-box;box-shadow:inset 0 0 0 1px rgba(255,255,255,0.45)"></div><div class="a" style="left:173px;top:1043px;width:1px;height:34px;background:rgba(60,80,110,0.6);border-right:1px solid rgba(255,255,255,0.5)"></div><div class="a" style="left:177px;top:1043px;width:1px;height:34px;background:rgba(60,80,110,0.6);border-right:1px solid rgba(255,255,255,0.5)"></div><div class="a" style="left:669px;top:1043px;width:1px;height:34px;background:rgba(60,80,110,0.6);border-right:1px solid rgba(255,255,255,0.5)"></div><div class="a" style="left:673px;top:1043px;width:1px;height:34px;background:rgba(60,80,110,0.6);border-right:1px solid rgba(255,255,255,0.5)"></div><div class="a" style="left:132px;top:1049px;width:30px;height:26px;background:linear-gradient(#fff2b8,#e8c468);border:1px solid #c0a050;border-radius:2px;box-sizing:border-box"></div><div class="a" style="left:135px;top:1047px;width:6px;height:3px;background:#30c030"></div><div class="a" style="left:143px;top:1049px;width:6px;height:3px;background:#e03030"></div><div class="a" style="left:151px;top:1051px;width:6px;height:3px;background:#3090e0"></div><div class="a" style="left:135px;top:1063px;width:24px;height:13px;border:4px solid #8cc8ec;border-bottom:none;border-radius:3px 3px 0 0;box-sizing:border-box"></div><div class="a" style="left:199px;top:1049px;width:24px;height:25px;background:linear-gradient(135deg,#f0f6fb,#a8cce8);border:1px solid #7ba0c0;box-sizing:border-box"></div><div class="a" style="left:201px;top:1052px;width:17px;height:17px;border-radius:50%;background:radial-gradient(circle at 40% 35%,#ffc080,#f07010 70%)"></div><svg class="a" style="left:206px;top:1056px" width="9" height="10"><path d="M0 0L9 5L0 10Z" fill="#fff"/></svg><div class="a" style="left:259px;top:1045px;width:31px;height:31px;border-radius:50%;background:conic-gradient(from -60deg,#e0402e 0deg 120deg,#f8c21a 120deg 240deg,#2a9e48 240deg 360deg)"></div><div class="a" style="left:267px;top:1053px;width:15px;height:15px;border-radius:50%;background:#3a7ae4;box-shadow:0 0 0 2.5px #fff"></div><div class="a" style="left:321px;top:1045px;width:30px;height:31px;border-radius:50%;background:radial-gradient(circle at 40% 40%,#ff3040,#c00818)"></div><div class="a" style="left:330px;top:1049px;width:12px;height:23px;border-radius:50%;background:#a8c0dc"></div><div class="a" style="left:384px;top:1046px;width:24px;height:19px;border-radius:50%;border:2px solid #e04848;background:rgba(255,255,255,0.75);box-sizing:border-box"></div><div class="a" style="left:383px;top:1054px;width:20px;height:14px;border-radius:50%;background:rgba(230,170,180,0.45)"></div><svg class="a" style="left:387px;top:1047px" width="28" height="30"><path d="M4 2L20 22M17 4L9 22" stroke="#7a8894" stroke-width="2.4"/><ellipse cx="10" cy="25" rx="3.5" ry="4" fill="none" stroke="#2a8ad8" stroke-width="2.2"/><ellipse cx="21" cy="24" rx="4" ry="3.5" fill="none" stroke="#2a8ad8" stroke-width="2.2"/></svg><div class="a" style="left:445px;top:1047px;width:30px;height:24px;background:#000;border:1px solid #555;border-top:3px solid #b8c0c8;box-sizing:border-box;font:bold 9px/13px 'Liberation Mono';color:#fff;padding-left:3px;white-space:pre">C:\_</div><div class="a" style="left:569px;top:1047px;width:30px;height:24px;background:#000;border:1px solid #555;border-top:3px solid #b8c0c8;box-sizing:border-box;font:bold 9px/13px 'Liberation Mono';color:#fff;padding-left:3px;white-space:pre">C:\_</div><svg class="a" style="left:507px;top:1045px" width="32" height="34" viewBox="0 0 17 18"><path d="M6 17.5 Q7 12 6 10 L11.5 9 Q12.5 14 15.5 17.5Z" fill="#caa282"/><path d="M2.5 3 Q5 -0.5 10 0.8 Q14 1.8 15.2 5 Q16.5 7 15.5 9.5 Q15 12 13 12.5 Q14.5 15 13.5 16.5 Q11.5 13 10.8 10 Q9.5 6 7.5 4.5 Q5 3.5 3 6.5 Q1.5 5 2.5 3Z" fill="#1c120c"/><ellipse cx="6.6" cy="8" rx="3.6" ry="4.6" fill="#dcb898"/><path d="M4.2 11 Q5 12 6 11.5" stroke="#a05040" stroke-width="0.9" fill="none"/><path d="M3.5 7.2H5.2M6.8 7H8.6" stroke="#8a6a5a" stroke-width="0.7"/></svg><svg class="a" style="left:627px;top:1045px" width="32" height="32" viewBox="0 0 17 17"><rect x="4" y="2.5" width="11" height="14" fill="#fff"/><path d="M15.3 2.5V16.5H4.5" fill="none" stroke="#b09060" stroke-width="0.9"/><path d="M5 2.5H14.2L12.6 14.8H1.2Z" fill="#8ccbe0"/><path d="M5 2.5H14.2L12.6 14.8H1.2Z" fill="none" stroke="#6ab0c8" stroke-width="0.4"/><path d="M9 3L13.8 3L12.8 11Z" fill="#c8eef8" opacity="0.6"/><path d="M5.5 2H13.5" stroke="#555" stroke-width="1" stroke-dasharray="0.8 0.7"/></svg><div class="t ui" style="left:1683px;top:1051px;color:#eef2f6;font-size:12px">TR</div><svg class="a" style="left:1713px;top:1058px" width="9" height="6"><path d="M0.5 5.5L4.5 0.8L8.5 5.5Z" fill="#fff" stroke="#6a7a8a" stroke-width="0.5"/></svg><svg class="a" style="left:1734px;top:1052px" width="16" height="18"><path d="M2 1.5V17" stroke="#fff" stroke-width="1.6"/><path d="M2.5 2.5Q6 1 9 3Q12 4.5 14.5 3.5L13 9Q10 10 7.5 8.5Q5 7 2.5 8.5Z" fill="#fff" stroke="#555" stroke-width="0.5"/></svg><svg class="a" style="left:1758px;top:1053px" width="17" height="16"><rect width="17" height="16" fill="#0a1a8a"/><circle cx="8.5" cy="8" r="1.8" fill="#f8e010"/><path d="M5.5 4.5Q3.5 8 5.5 11.5M11.5 4.5Q13.5 8 11.5 11.5M3.8 3Q1 8 3.8 13M13.2 3Q16 8 13.2 13" fill="none" stroke="#f8e010" stroke-width="1"/></svg><svg class="a" style="left:1782px;top:1052px" width="18" height="18"><rect x="5.5" y="4.5" width="11" height="9" fill="#7a8a9a" stroke="#fff" stroke-width="1.2"/><path d="M9 16H14M11.5 14V16" stroke="#fff" stroke-width="1.3"/><path d="M1.5 1V8M4.5 1V8M1 7H5V10H3V17" fill="none" stroke="#fff" stroke-width="1.2"/></svg><svg class="a" style="left:1808px;top:1053px" width="16" height="16"><path d="M1 5H4.5L9.5 1V15L4.5 11H1Z" fill="#f0f0f0" stroke="#555" stroke-width="0.6"/><path d="M12 5.5Q13.5 8 12 10.5" fill="none" stroke="#fff" stroke-width="1"/></svg><div class="t ui" style="left:1855px;top:1046px;color:#fff;font-size:12px">20:13</div><div class="t ui" style="left:1840px;top:1064px;color:#fff;font-size:12px;letter-spacing:-0.7px">12.10.2023</div><div class="a" style="left:1905px;top:1041px;width:14px;height:38px;background:linear-gradient(90deg,#5a6c84,#72849a);border-left:1px solid #3a4a5a"></div></body></html>
